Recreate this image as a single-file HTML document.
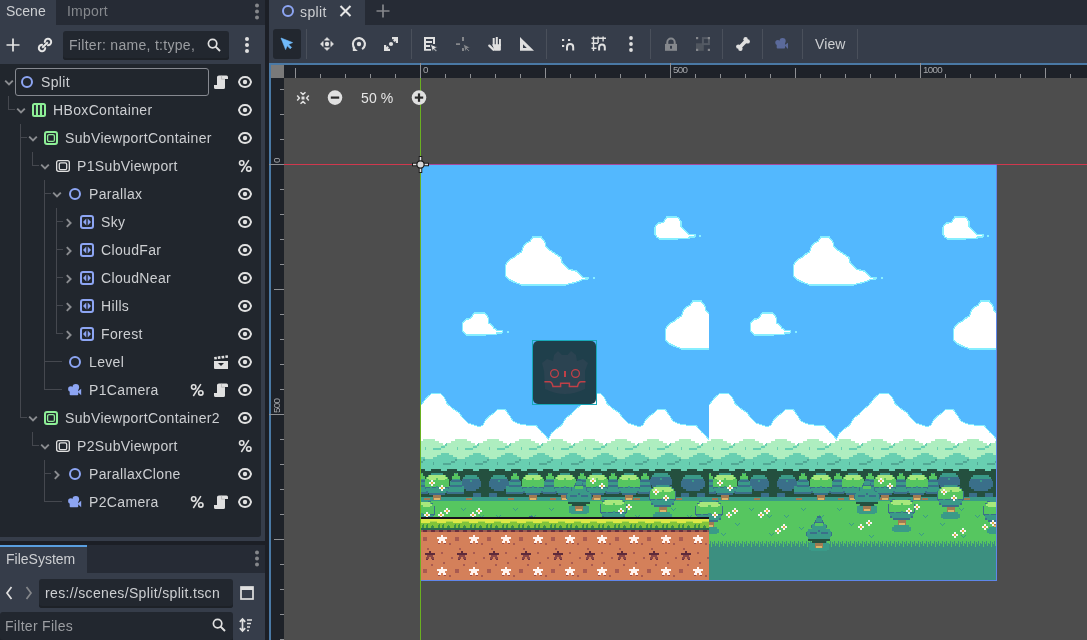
<!DOCTYPE html>
<html><head><meta charset="utf-8">
<style>
*{box-sizing:border-box;margin:0;padding:0}
html,body{width:1087px;height:640px;overflow:hidden;background:#1c1f26;font-family:"Liberation Sans",sans-serif;font-size:14px;color:#cdcfd2}
.a{position:absolute}
.tabbar{background:#262b35}
.base{background:#363d4a}
.dark{background:#21262d}
.t{position:absolute;white-space:pre;line-height:28px;height:28px;will-change:transform}
.tl{letter-spacing:0.35px}
.ln{background:#45484f}
.sep{top:29px;width:1px;height:30px;background:#4a505b}
svg{position:absolute;overflow:visible}
</style></head><body>
<svg width="0" height="0" style="position:absolute">
<defs>
<symbol id="i-node2d" viewBox="0 0 14 14"><circle cx="7" cy="7" r="5" fill="none" stroke="#8da5f3" stroke-width="2"/></symbol>
<symbol id="i-hbox" viewBox="0 0 14 14"><rect x="1" y="1" width="12" height="12" rx="1.5" fill="none" stroke="#8eef97" stroke-width="2"/><rect x="3.9" y="1" width="2.1" height="12" fill="#8eef97"/><rect x="7.9" y="1" width="2.2" height="12" fill="#8eef97"/></symbol>
<symbol id="i-svc" viewBox="0 0 14 14"><rect x="1" y="1" width="12" height="12" rx="2" fill="none" stroke="#8eef97" stroke-width="2"/><rect x="3.6" y="3.6" width="6.8" height="6.8" rx="1.5" fill="none" stroke="#8eef97" stroke-width="1.3"/></symbol>
<symbol id="i-sv" viewBox="0 0 14 14"><rect x="0.65" y="1.65" width="12.7" height="10.7" rx="2" fill="none" stroke="#e0e0e0" stroke-width="1.3"/><rect x="3.3" y="3.8" width="7.4" height="6.9" rx="1.5" fill="none" stroke="#e0e0e0" stroke-width="1.3"/></symbol>
<symbol id="i-plx" viewBox="0 0 14 14"><rect x="1" y="1" width="12" height="12" rx="2" fill="none" stroke="#8da5f3" stroke-width="2"/><path d="M3,7 L6.3,3.6 L6.3,10.4Z M11,7 L7.7,3.6 L7.7,10.4Z" fill="#8da5f3"/></symbol>
<symbol id="i-cam" viewBox="0 0 14 14"><circle cx="2.8" cy="6" r="2.7" fill="#8da5f3"/><circle cx="7.8" cy="4.2" r="3.3" fill="#8da5f3"/><rect x="1.7" y="5" width="8.5" height="7.2" rx="0.8" fill="#8da5f3"/><path d="M9.5,8.8 L13.2,5.8 L13.2,12.2 Z" fill="#8da5f3"/></symbol>
<symbol id="i-eye" viewBox="0 0 14 14"><path d="M0.9,7 C2.6,0.4 11.4,0.4 13.1,7 C11.4,13.6 2.6,13.6 0.9,7 Z" fill="none" stroke="#e0e0e0" stroke-width="1.9"/><circle cx="7" cy="7" r="2.2" fill="#e0e0e0"/></symbol>
<symbol id="i-script" viewBox="0 0 14 14"><path d="M5,0.5 H12.5 Q14,0.5 14,2 V4 H11 V12.5 Q11,14 9.5,14 H1.5 Q0,14 0,12.5 V10 H3 V2 Q3,0.5 5,0.5 Z" fill="#e0e0e0"/><path d="M7.5,0.8 V4.2 H10.8" fill="none" stroke="#b8b8b8" stroke-width="0.8"/></symbol>
<symbol id="i-clap" viewBox="0 0 14 14"><path d="M0,6 H14 V14 H1 Q0,14 0,13 Z" fill="#e0e0e0"/><path d="M4,8 H10 L7,11 Z" fill="#22262c"/><rect x="0.2" y="1.8" width="2.6" height="2.6" fill="#e0e0e0" transform="rotate(-8 1.5 3)"/><rect x="3.8" y="1.3" width="2.6" height="2.6" fill="#e0e0e0" transform="rotate(-8 5 2.6)"/><rect x="7.6" y="0.8" width="2.6" height="2.6" fill="#e0e0e0" transform="rotate(-8 9 2)"/><rect x="11.4" y="0.3" width="2.6" height="2.6" fill="#e0e0e0" transform="rotate(-8 12.7 1.6)"/></symbol>
<symbol id="i-pct" viewBox="0 0 14 14"><circle cx="3.7" cy="4" r="2.2" fill="none" stroke="#e0e0e0" stroke-width="1.6"/><circle cx="10.8" cy="9.9" r="2.2" fill="none" stroke="#e0e0e0" stroke-width="1.6"/><path d="M10.9,1.2 L3.3,13" stroke="#e0e0e0" stroke-width="1.5"/></symbol>
<symbol id="i-down" viewBox="0 0 10 10"><path d="M1.2,2.6 L5,6.4 L8.8,2.6" fill="none" stroke="#8a8c90" stroke-width="1.9"/></symbol>
<symbol id="i-right" viewBox="0 0 10 10"><path d="M2.8,1.2 L6.6,5 L2.8,8.8" fill="none" stroke="#8a8c90" stroke-width="1.9"/></symbol>
</defs></svg>

<!-- ===== LEFT TOP DOCK ===== -->
<div class="a tabbar" style="left:0;top:0;width:265px;height:25px"></div>
<div class="a base" style="left:0;top:0;width:56px;height:25px"></div>
<div class="t" style="left:6px;top:-3px;color:#cdcfd2">Scene</div>
<div class="t" style="left:67px;top:-3px;color:#85888d;letter-spacing:0.2px">Import</div>
<svg style="left:253px;top:2.5px" width="8" height="18"><circle cx="4" cy="2.5" r="2" fill="#85878b"/><circle cx="4" cy="8.5" r="2" fill="#85878b"/><circle cx="4" cy="14.5" r="2" fill="#85878b"/></svg>
<div class="a base" style="left:0;top:25px;width:265px;height:516px"></div>
<svg style="left:6px;top:38px" width="14" height="14"><path d="M7,0.5 V13.5 M0.5,7 H13.5" stroke="#e6e6e6" stroke-width="1.7"/></svg>
<svg style="left:38px;top:38px" width="14" height="14"><path d="M7.09,9.17 A3.2,3.2 0 1 1 4.83,6.91 M6.91,4.83 A3.2,3.2 0 1 1 9.17,7.09 M4.2,9.8 L9.8,4.2" fill="none" stroke="#e6e6e6" stroke-width="2"/></svg>
<div class="a" style="left:63px;top:31px;width:166px;height:29px;background:#22272f;border-radius:3px;box-shadow:inset 0 -2px 0 #1d2127"></div>
<div class="t" style="left:69px;top:31px;color:#9b9da1;letter-spacing:0.3px">Filter: name, t:type,</div>
<svg style="left:207px;top:38px" width="14" height="14"><circle cx="5.6" cy="5.6" r="4.2" fill="none" stroke="#e0e0e0" stroke-width="1.7"/><path d="M8.6,8.6 L13,13" stroke="#e0e0e0" stroke-width="2"/></svg>
<svg style="left:243px;top:37px" width="8" height="18"><circle cx="4" cy="2" r="2" fill="#e0e0e0"/><circle cx="4" cy="8" r="2" fill="#e0e0e0"/><circle cx="4" cy="14" r="2" fill="#e0e0e0"/></svg>
<div class="a dark" style="left:0;top:64px;width:261px;height:473px;border-radius:0 0 3px 0"></div>
<div class="a" style="left:15px;top:68px;width:194px;height:28px;border:1px solid #868990;border-radius:3px"></div>
<div class="a ln" style="left:8px;top:96px;width:1px;height:14px"></div>
<div class="a ln" style="left:20px;top:124px;width:1px;height:294px"></div>
<div class="a ln" style="left:32px;top:152px;width:1px;height:14px"></div>
<div class="a ln" style="left:44px;top:180px;width:1px;height:210px"></div>
<div class="a ln" style="left:56px;top:208px;width:1px;height:126px"></div>
<div class="a ln" style="left:32px;top:432px;width:1px;height:14px"></div>
<div class="a ln" style="left:44px;top:460px;width:1px;height:42px"></div>
<div class="a ln" style="left:8px;top:109px;width:7px;height:1px"></div>
<div class="a ln" style="left:20px;top:137px;width:7px;height:1px"></div>
<div class="a ln" style="left:20px;top:417px;width:7px;height:1px"></div>
<div class="a ln" style="left:32px;top:165px;width:7px;height:1px"></div>
<div class="a ln" style="left:44px;top:193px;width:7px;height:1px"></div>
<div class="a ln" style="left:44px;top:361px;width:18px;height:1px"></div>
<div class="a ln" style="left:44px;top:389px;width:18px;height:1px"></div>
<div class="a ln" style="left:56px;top:221px;width:7px;height:1px"></div>
<div class="a ln" style="left:56px;top:249px;width:7px;height:1px"></div>
<div class="a ln" style="left:56px;top:277px;width:7px;height:1px"></div>
<div class="a ln" style="left:56px;top:305px;width:7px;height:1px"></div>
<div class="a ln" style="left:56px;top:333px;width:7px;height:1px"></div>
<div class="a ln" style="left:32px;top:445px;width:7px;height:1px"></div>
<div class="a ln" style="left:44px;top:473px;width:7px;height:1px"></div>
<div class="a ln" style="left:44px;top:501px;width:18px;height:1px"></div>
<div class="t tl" style="left:41px;top:68px">Split</div>
<svg style="left:20px;top:75px" width="14" height="14"><use href="#i-node2d"/></svg>
<svg style="left:4px;top:78px" width="10" height="10"><use href="#i-down"/></svg>
<svg style="left:214px;top:75px" width="14" height="14"><use href="#i-script"/></svg>
<svg style="left:238px;top:75px" width="14" height="14"><use href="#i-eye"/></svg>
<div class="t tl" style="left:53px;top:96px">HBoxContainer</div>
<svg style="left:32px;top:103px" width="14" height="14"><use href="#i-hbox"/></svg>
<svg style="left:16px;top:106px" width="10" height="10"><use href="#i-down"/></svg>
<svg style="left:238px;top:103px" width="14" height="14"><use href="#i-eye"/></svg>
<div class="t tl" style="left:65px;top:124px">SubViewportContainer</div>
<svg style="left:44px;top:131px" width="14" height="14"><use href="#i-svc"/></svg>
<svg style="left:28px;top:134px" width="10" height="10"><use href="#i-down"/></svg>
<svg style="left:238px;top:131px" width="14" height="14"><use href="#i-eye"/></svg>
<div class="t tl" style="left:77px;top:152px">P1SubViewport</div>
<svg style="left:56px;top:159px" width="14" height="14"><use href="#i-sv"/></svg>
<svg style="left:40px;top:162px" width="10" height="10"><use href="#i-down"/></svg>
<svg style="left:238px;top:159px" width="14" height="14"><use href="#i-pct"/></svg>
<div class="t tl" style="left:89px;top:180px">Parallax</div>
<svg style="left:68px;top:187px" width="14" height="14"><use href="#i-node2d"/></svg>
<svg style="left:52px;top:190px" width="10" height="10"><use href="#i-down"/></svg>
<svg style="left:238px;top:187px" width="14" height="14"><use href="#i-eye"/></svg>
<div class="t tl" style="left:101px;top:208px">Sky</div>
<svg style="left:80px;top:215px" width="14" height="14"><use href="#i-plx"/></svg>
<svg style="left:64px;top:218px" width="10" height="10"><use href="#i-right"/></svg>
<svg style="left:238px;top:215px" width="14" height="14"><use href="#i-eye"/></svg>
<div class="t tl" style="left:101px;top:236px">CloudFar</div>
<svg style="left:80px;top:243px" width="14" height="14"><use href="#i-plx"/></svg>
<svg style="left:64px;top:246px" width="10" height="10"><use href="#i-right"/></svg>
<svg style="left:238px;top:243px" width="14" height="14"><use href="#i-eye"/></svg>
<div class="t tl" style="left:101px;top:264px">CloudNear</div>
<svg style="left:80px;top:271px" width="14" height="14"><use href="#i-plx"/></svg>
<svg style="left:64px;top:274px" width="10" height="10"><use href="#i-right"/></svg>
<svg style="left:238px;top:271px" width="14" height="14"><use href="#i-eye"/></svg>
<div class="t tl" style="left:101px;top:292px">Hills</div>
<svg style="left:80px;top:299px" width="14" height="14"><use href="#i-plx"/></svg>
<svg style="left:64px;top:302px" width="10" height="10"><use href="#i-right"/></svg>
<svg style="left:238px;top:299px" width="14" height="14"><use href="#i-eye"/></svg>
<div class="t tl" style="left:101px;top:320px">Forest</div>
<svg style="left:80px;top:327px" width="14" height="14"><use href="#i-plx"/></svg>
<svg style="left:64px;top:330px" width="10" height="10"><use href="#i-right"/></svg>
<svg style="left:238px;top:327px" width="14" height="14"><use href="#i-eye"/></svg>
<div class="t tl" style="left:89px;top:348px">Level</div>
<svg style="left:68px;top:355px" width="14" height="14"><use href="#i-node2d"/></svg>
<svg style="left:214px;top:355px" width="14" height="14"><use href="#i-clap"/></svg>
<svg style="left:238px;top:355px" width="14" height="14"><use href="#i-eye"/></svg>
<div class="t tl" style="left:89px;top:376px">P1Camera</div>
<svg style="left:68px;top:383px" width="14" height="14"><use href="#i-cam"/></svg>
<svg style="left:190px;top:383px" width="14" height="14"><use href="#i-pct"/></svg>
<svg style="left:214px;top:383px" width="14" height="14"><use href="#i-script"/></svg>
<svg style="left:238px;top:383px" width="14" height="14"><use href="#i-eye"/></svg>
<div class="t tl" style="left:65px;top:404px">SubViewportContainer2</div>
<svg style="left:44px;top:411px" width="14" height="14"><use href="#i-svc"/></svg>
<svg style="left:28px;top:414px" width="10" height="10"><use href="#i-down"/></svg>
<svg style="left:238px;top:411px" width="14" height="14"><use href="#i-eye"/></svg>
<div class="t tl" style="left:77px;top:432px">P2SubViewport</div>
<svg style="left:56px;top:439px" width="14" height="14"><use href="#i-sv"/></svg>
<svg style="left:40px;top:442px" width="10" height="10"><use href="#i-down"/></svg>
<svg style="left:238px;top:439px" width="14" height="14"><use href="#i-pct"/></svg>
<div class="t tl" style="left:89px;top:460px">ParallaxClone</div>
<svg style="left:68px;top:467px" width="14" height="14"><use href="#i-node2d"/></svg>
<svg style="left:52px;top:470px" width="10" height="10"><use href="#i-right"/></svg>
<svg style="left:238px;top:467px" width="14" height="14"><use href="#i-eye"/></svg>
<div class="t tl" style="left:89px;top:488px">P2Camera</div>
<svg style="left:68px;top:495px" width="14" height="14"><use href="#i-cam"/></svg>
<svg style="left:190px;top:495px" width="14" height="14"><use href="#i-pct"/></svg>
<svg style="left:214px;top:495px" width="14" height="14"><use href="#i-script"/></svg>
<svg style="left:238px;top:495px" width="14" height="14"><use href="#i-eye"/></svg>

<!-- ===== LEFT BOTTOM DOCK ===== -->
<div class="a tabbar" style="left:0;top:545px;width:265px;height:28px"></div>
<div class="a base" style="left:0;top:547px;width:87px;height:26px"></div>
<div class="a" style="left:0;top:545px;width:87px;height:2px;background:#5a9fe0"></div>
<div class="t" style="left:6px;top:545px">FileSystem</div>
<svg style="left:253px;top:549px" width="8" height="18"><circle cx="4" cy="3.5" r="2" fill="#85878b"/><circle cx="4" cy="9.5" r="2" fill="#85878b"/><circle cx="4" cy="15.5" r="2" fill="#85878b"/></svg>
<div class="a base" style="left:0;top:573px;width:265px;height:67px"></div>
<svg style="left:2px;top:586px" width="14" height="14"><path d="M9.5,1 L5,7 L9.5,13" fill="none" stroke="#e0e0e0" stroke-width="1.7"/></svg>
<svg style="left:22px;top:586px" width="14" height="14"><path d="M4.5,1 L9,7 L4.5,13" fill="none" stroke="#85878b" stroke-width="1.7"/></svg>
<div class="a" style="left:39px;top:579px;width:194px;height:29px;background:#22272f;border-radius:3px;box-shadow:inset 0 -2px 0 #1d2127"></div>
<div class="t" style="left:45px;top:579px;letter-spacing:0.35px">res://scenes/Split/split.tscn</div>
<svg style="left:240px;top:586px" width="14" height="14"><rect x="1" y="1" width="12" height="12" fill="none" stroke="#e0e0e0" stroke-width="1.7"/><rect x="1" y="1" width="12" height="3" fill="#e0e0e0"/></svg>
<div class="a" style="left:0;top:612px;width:233px;height:30px;background:#22272f;border-radius:3px;box-shadow:inset 0 -2px 0 #1d2127"></div>
<div class="t" style="left:5px;top:612px;color:#9b9da1;letter-spacing:0.3px">Filter Files</div>
<svg style="left:212px;top:618px" width="14" height="14"><circle cx="5.6" cy="5.6" r="4.2" fill="none" stroke="#e0e0e0" stroke-width="1.7"/><path d="M8.6,8.6 L13,13" stroke="#e0e0e0" stroke-width="2"/></svg>
<svg style="left:239px;top:618px" width="14" height="14"><path d="M3.5,1 V13 M0.8,3.8 L3.5,1 L6.2,3.8 M0.8,10.2 L3.5,13 L6.2,10.2 M8,2 H13 M8,5.5 H12 M8,9 H11 M8,12.5 H10" fill="none" stroke="#e0e0e0" stroke-width="1.7"/></svg>

<!-- ===== MAIN ===== -->
<div class="a tabbar" style="left:269px;top:0;width:818px;height:25px"></div>
<div class="a base" style="left:269px;top:0;width:96px;height:25px"></div>
<svg style="left:281px;top:4px" width="14" height="14"><use href="#i-node2d"/></svg>
<div class="t" style="left:300px;top:-2px;letter-spacing:0.4px">split</div>
<svg style="left:339px;top:5px" width="14" height="12"><path d="M1.5,1 L11.5,11 M11.5,1 L1.5,11" stroke="#e6e6e6" stroke-width="2"/></svg>
<svg style="left:376px;top:4px" width="14" height="14"><path d="M7,0.5 V13.5 M0.5,7 H13.5" stroke="#85878b" stroke-width="1.7"/></svg>
<div class="a base" style="left:269px;top:25px;width:818px;height:38px"></div>
<div class="a" style="left:273px;top:29px;width:28px;height:30px;background:#22272f;border-radius:3px"></div>
<svg style="left:280px;top:37px" width="14" height="14"><path d="M1,1 L12.6,5.6 L8.6,7.4 L11.6,10.4 L10.2,11.8 L7.2,8.8 L5.6,12.6 Z" fill="#70bafa" stroke="#70bafa" stroke-width="0.6" stroke-linejoin="round"/></svg>
<div class="a sep" style="left:306px"></div>
<svg style="left:320px;top:37px" width="14" height="14"><circle cx="7" cy="7" r="2.2" fill="#e0e0e0"/><path d="M4.3,3.2 L7,0.4 L9.7,3.2 Z M4.3,10.8 L7,13.6 L9.7,10.8 Z M3.2,4.3 L0.4,7 L3.2,9.7 Z M10.8,4.3 L13.6,7 L10.8,9.7 Z" fill="#e0e0e0" stroke="#e0e0e0" stroke-width="0.5" stroke-linejoin="round"/></svg>
<svg style="left:352px;top:37px" width="14" height="14"><circle cx="7" cy="7" r="2.2" fill="#e0e0e0"/><path d="M10.1,12.2 A6,6 0 1 0 2.6,11.3" fill="none" stroke="#e0e0e0" stroke-width="2.1"/><path d="M0.8,9 L0.8,13.9 L5.8,13.9 Z" fill="#e0e0e0"/></svg>
<svg style="left:384px;top:37px" width="14" height="14"><circle cx="7" cy="7" r="2.1" fill="#e0e0e0"/><path d="M8,1.1 H12.9 V6 M12.6,1.4 L9.8,4.2 M6,12.9 H1.1 V8 M1.4,12.6 L4.2,9.8" fill="none" stroke="#e0e0e0" stroke-width="2.2"/></svg>
<div class="a sep" style="left:411px"></div>
<svg style="left:424px;top:37px" width="14" height="14"><path d="M0,0 H11 V7 H9 V2 H2 V4 H8 V6 H2 V8 H6 V10 H2 V12 H7 V13.8 H0 Z" fill="#e0e0e0"/><path d="M6.3,7.2 L13.8,10.3 L10.8,11.4 L12.9,13.5 L11.9,14.5 L9.8,12.4 L8.7,15 Z" fill="#e0e0e0" stroke="#363d4a" stroke-width="0.9" stroke-linejoin="round"/></svg>
<svg style="left:456px;top:37px" width="14" height="14"><path d="M6,0 H8 V4 H6 Z M0,6.2 H4 V8 H0 Z M6,11 H8 V14 H6 Z" fill="#85878b"/><path d="M7.2,7 L14.4,10.4 L11.4,11.5 L13.5,13.6 L12.5,14.6 L10.4,12.5 L9.3,15.2 Z" fill="#85878b" stroke="#363d4a" stroke-width="0.9" stroke-linejoin="round"/></svg>
<svg style="left:488px;top:37px" width="14" height="14"><rect x="4.7" y="1" width="2" height="8" fill="#e0e0e0"/><rect x="7.8" y="0" width="2" height="8" fill="#e0e0e0"/><rect x="11" y="2" width="1.9" height="7" fill="#e0e0e0"/><path d="M4.3,7.2 H12.9 V12.6 Q12.9,13.8 11.7,13.8 H6.4 Z" fill="#e0e0e0"/><path d="M1.3,8.6 L5.5,12.8" stroke="#e0e0e0" stroke-width="2.3" stroke-linecap="round"/></svg>
<svg style="left:520px;top:37px" width="14" height="14"><path d="M0,0 L14,13.8 L0,13.8 Z M3,7.3 L3,11 L6.8,11 Z" fill="#e0e0e0" fill-rule="evenodd"/></svg>
<div class="a sep" style="left:546px"></div>
<svg style="left:561px;top:37px" width="14" height="14"><rect x="1" y="2" width="2.2" height="2" fill="#e0e0e0"/><rect x="7" y="2" width="2.2" height="2" fill="#e0e0e0"/><rect x="1" y="8" width="2.2" height="2" fill="#e0e0e0"/><path d="M6,13.6 V10.2 A3.1,3.1 0 0 1 12.2,10.2 V13.6" fill="none" stroke="#e0e0e0" stroke-width="2"/></svg>
<svg style="left:592px;top:37px" width="14" height="14"><path d="M1.5,-0.5 V14 M6.1,-0.5 V6 M11.1,-0.5 V4.5 M-0.5,1.2 H14 M-0.5,6.3 H6 M-0.5,11.3 H4.5" fill="none" stroke="#e0e0e0" stroke-width="1.4"/><path d="M7.1,13.6 V10.3 A2.85,2.85 0 0 1 12.8,10.3 V13.6" fill="none" stroke="#e0e0e0" stroke-width="2"/></svg>
<svg style="left:627px;top:36px" width="8" height="16"><circle cx="4" cy="2" r="1.9" fill="#e0e0e0"/><circle cx="4" cy="8" r="1.9" fill="#e0e0e0"/><circle cx="4" cy="14" r="1.9" fill="#e0e0e0"/></svg>
<div class="a sep" style="left:650px"></div>
<svg style="left:664px;top:37px" width="14" height="14"><path d="M3.3,7 V5.3 A3.7,3.7 0 0 1 10.7,5.3 V7" fill="none" stroke="#85888d" stroke-width="2"/><rect x="1" y="6.9" width="12" height="6.9" fill="#85888d"/><rect x="6" y="8.8" width="2" height="2.9" fill="#363d4a"/></svg>
<svg style="left:696px;top:37px" width="14" height="14"><rect x="0" y="6.3" width="7.8" height="7.5" fill="#50565f"/><rect x="6.9" y="1.1" width="6" height="6" fill="none" stroke="#545a64" stroke-width="2"/><rect x="0" y="0" width="2.2" height="2.2" fill="#85888d"/><rect x="11.8" y="0" width="2.2" height="2.2" fill="#85888d"/><rect x="0" y="11.8" width="2.2" height="2.2" fill="#85888d"/><rect x="11.8" y="11.8" width="2.2" height="2.2" fill="#85888d"/></svg>
<div class="a sep" style="left:722px"></div>
<svg style="left:736px;top:37px" width="14" height="14"><path d="M3.6,10.4 L10.4,3.6" stroke="#e0e0e0" stroke-width="3.6"/><circle cx="2.3" cy="9.6" r="2.2" fill="#e0e0e0"/><circle cx="4.4" cy="11.7" r="2.2" fill="#e0e0e0"/><circle cx="9.6" cy="2.3" r="2.2" fill="#e0e0e0"/><circle cx="11.7" cy="4.4" r="2.2" fill="#e0e0e0"/></svg>
<div class="a sep" style="left:762px"></div>
<svg style="left:775px;top:37px" width="14" height="14"><circle cx="2.8" cy="5.6" r="2.5" fill="#5b6a9b"/><circle cx="7.6" cy="4" r="3.1" fill="#5b6a9b"/><rect x="1.7" y="5" width="8.3" height="6.6" rx="0.8" fill="#5b6a9b"/><path d="M9.4,8.3 L13,5.8 L13,11.9 Z" fill="#5b6a9b"/></svg>
<div class="a sep" style="left:802px"></div>
<div class="t" style="left:815px;top:30px;letter-spacing:0.1px">View</div>
<div class="a sep" style="left:857px"></div>

<!-- ruler frame -->
<div class="a" style="left:269px;top:63px;width:818px;height:577px;background:#4a79a5"></div>
<div class="a" style="left:271px;top:65px;width:816px;height:575px;background:#1e2229"></div>
<div class="a" style="left:271px;top:65px;width:13px;height:13px;background:#7a7a7a"></div>
<div class="a" style="left:284px;top:78px;width:803px;height:562px;background:#4d4d4d"></div>
<div class="a" style="left:295px;top:68px;width:1px;height:10px;background:#8e9094"></div>
<div class="a" style="left:320px;top:74px;width:1px;height:4px;background:#8e9094"></div>
<div class="a" style="left:345px;top:74px;width:1px;height:4px;background:#8e9094"></div>
<div class="a" style="left:370px;top:74px;width:1px;height:4px;background:#8e9094"></div>
<div class="a" style="left:395px;top:74px;width:1px;height:4px;background:#8e9094"></div>
<div class="a" style="left:420px;top:63px;width:1px;height:15px;background:#8e9094"></div>
<div class="a" style="left:445px;top:74px;width:1px;height:4px;background:#8e9094"></div>
<div class="a" style="left:470px;top:74px;width:1px;height:4px;background:#8e9094"></div>
<div class="a" style="left:495px;top:74px;width:1px;height:4px;background:#8e9094"></div>
<div class="a" style="left:520px;top:74px;width:1px;height:4px;background:#8e9094"></div>
<div class="a" style="left:545px;top:68px;width:1px;height:10px;background:#8e9094"></div>
<div class="a" style="left:570px;top:74px;width:1px;height:4px;background:#8e9094"></div>
<div class="a" style="left:595px;top:74px;width:1px;height:4px;background:#8e9094"></div>
<div class="a" style="left:620px;top:74px;width:1px;height:4px;background:#8e9094"></div>
<div class="a" style="left:645px;top:74px;width:1px;height:4px;background:#8e9094"></div>
<div class="a" style="left:670px;top:63px;width:1px;height:15px;background:#8e9094"></div>
<div class="a" style="left:695px;top:74px;width:1px;height:4px;background:#8e9094"></div>
<div class="a" style="left:720px;top:74px;width:1px;height:4px;background:#8e9094"></div>
<div class="a" style="left:745px;top:74px;width:1px;height:4px;background:#8e9094"></div>
<div class="a" style="left:770px;top:74px;width:1px;height:4px;background:#8e9094"></div>
<div class="a" style="left:795px;top:68px;width:1px;height:10px;background:#8e9094"></div>
<div class="a" style="left:820px;top:74px;width:1px;height:4px;background:#8e9094"></div>
<div class="a" style="left:845px;top:74px;width:1px;height:4px;background:#8e9094"></div>
<div class="a" style="left:870px;top:74px;width:1px;height:4px;background:#8e9094"></div>
<div class="a" style="left:895px;top:74px;width:1px;height:4px;background:#8e9094"></div>
<div class="a" style="left:920px;top:63px;width:1px;height:15px;background:#8e9094"></div>
<div class="a" style="left:945px;top:74px;width:1px;height:4px;background:#8e9094"></div>
<div class="a" style="left:970px;top:74px;width:1px;height:4px;background:#8e9094"></div>
<div class="a" style="left:995px;top:74px;width:1px;height:4px;background:#8e9094"></div>
<div class="a" style="left:1020px;top:74px;width:1px;height:4px;background:#8e9094"></div>
<div class="a" style="left:1045px;top:68px;width:1px;height:10px;background:#8e9094"></div>
<div class="a" style="left:1070px;top:74px;width:1px;height:4px;background:#8e9094"></div>
<div class="a" style="left:280px;top:89px;width:4px;height:1px;background:#8e9094"></div>
<div class="a" style="left:280px;top:114px;width:4px;height:1px;background:#8e9094"></div>
<div class="a" style="left:280px;top:139px;width:4px;height:1px;background:#8e9094"></div>
<div class="a" style="left:269px;top:164px;width:15px;height:1px;background:#8e9094"></div>
<div class="a" style="left:280px;top:189px;width:4px;height:1px;background:#8e9094"></div>
<div class="a" style="left:280px;top:214px;width:4px;height:1px;background:#8e9094"></div>
<div class="a" style="left:280px;top:239px;width:4px;height:1px;background:#8e9094"></div>
<div class="a" style="left:280px;top:264px;width:4px;height:1px;background:#8e9094"></div>
<div class="a" style="left:274px;top:289px;width:10px;height:1px;background:#8e9094"></div>
<div class="a" style="left:280px;top:314px;width:4px;height:1px;background:#8e9094"></div>
<div class="a" style="left:280px;top:339px;width:4px;height:1px;background:#8e9094"></div>
<div class="a" style="left:280px;top:364px;width:4px;height:1px;background:#8e9094"></div>
<div class="a" style="left:280px;top:389px;width:4px;height:1px;background:#8e9094"></div>
<div class="a" style="left:269px;top:414px;width:15px;height:1px;background:#8e9094"></div>
<div class="a" style="left:280px;top:439px;width:4px;height:1px;background:#8e9094"></div>
<div class="a" style="left:280px;top:464px;width:4px;height:1px;background:#8e9094"></div>
<div class="a" style="left:280px;top:489px;width:4px;height:1px;background:#8e9094"></div>
<div class="a" style="left:280px;top:514px;width:4px;height:1px;background:#8e9094"></div>
<div class="a" style="left:274px;top:539px;width:10px;height:1px;background:#8e9094"></div>
<div class="a" style="left:280px;top:564px;width:4px;height:1px;background:#8e9094"></div>
<div class="a" style="left:280px;top:589px;width:4px;height:1px;background:#8e9094"></div>
<div class="a" style="left:280px;top:614px;width:4px;height:1px;background:#8e9094"></div>
<div class="a" style="left:280px;top:639px;width:4px;height:1px;background:#8e9094"></div>
<div class="a" style="left:423px;top:64px;font-size:9.8px;letter-spacing:-0.7px;line-height:12px;will-change:transform;color:#a4a6aa">0</div>
<div class="a" style="left:673px;top:64px;font-size:9.8px;letter-spacing:-0.7px;line-height:12px;will-change:transform;color:#a4a6aa">500</div>
<div class="a" style="left:923px;top:64px;font-size:9.8px;letter-spacing:-0.7px;line-height:12px;will-change:transform;color:#a4a6aa">1000</div>
<div class="a" style="left:270.5px;top:163px;font-size:9.8px;letter-spacing:-0.7px;line-height:12px;will-change:transform;color:#a4a6aa;transform-origin:0 0;transform:rotate(-90deg)">0</div>
<div class="a" style="left:270.5px;top:413px;font-size:9.8px;letter-spacing:-0.7px;line-height:12px;will-change:transform;color:#a4a6aa;transform-origin:0 0;transform:rotate(-90deg)">500</div>
<svg style="left:421px;top:165px" width="576" height="416" shape-rendering="crispEdges">
<defs><clipPath id="vc"><rect x="0" y="0" width="288" height="416"/></clipPath>
<g id="pview"><rect x="0" y="0" width="288" height="416" fill="#53b8fe"/>
<polygon points="112.0,72.0 120.2,72.0 124.0,77.2 125.0,81.4 130.0,86.0 135.2,89.4 140.0,92.6 141.3,97.8 144.6,100.6 147.9,104.4 155.8,106.2 159.6,110.0 161.5,112.3 167.6,112.8 167.6,113.7 161.5,114.7 155.8,117.0 147.9,118.9 144.6,119.8 100.6,119.8 93.0,117.0 88.4,114.7 84.6,111.4 84.2,101.0 86.5,96.9 88.8,94.5 93.0,92.2 96.3,89.4 100.6,87.0 102.4,81.4 104.8,78.6 109.0,76.2 111.3,73.4" fill="#fff" stroke="#86eeff" stroke-width="1.4" stroke-linejoin="miter"/><rect x="172" y="112" width="2" height="2" fill="#86eeff"/>
<polygon points="272.0,136.0 280.2,136.0 284.0,141.2 285.0,145.4 290.0,150.0 295.2,153.4 300.0,156.6 301.3,161.8 304.6,164.6 307.9,168.4 315.8,170.2 319.6,174.0 321.5,176.3 327.6,176.8 327.6,177.7 321.5,178.7 315.8,181.0 307.9,182.9 304.6,183.8 260.6,183.8 253.0,181.0 248.4,178.7 244.6,175.4 244.2,165.0 246.5,160.9 248.8,158.5 253.0,156.2 256.3,153.4 260.6,151.0 262.4,145.4 264.8,142.6 269.0,140.2 271.3,137.4" fill="#fff" stroke="#86eeff" stroke-width="1.4" stroke-linejoin="miter"/><rect x="332" y="176" width="2" height="2" fill="#86eeff"/>
<polygon points="245.8,52.0 256.0,52.0 258.0,53.8 259.9,56.6 259.9,61.6 262.1,63.2 264.0,65.4 266.0,67.6 268.2,69.3 274.0,69.8 274.0,71.8 268.2,72.0 267.9,73.7 238.4,74.0 235.9,72.0 234.0,69.8 234.0,62.1 235.9,59.6 237.8,58.0 242.0,57.7 243.9,54.7 245.8,52.5" fill="#fff" stroke="#86eeff" stroke-width="1.4" stroke-linejoin="miter"/><rect x="278" y="70" width="2" height="2" fill="#86eeff"/>
<polygon points="53.3,148.0 63.5,148.0 65.5,149.8 67.4,152.6 67.4,157.6 69.6,159.2 71.5,161.4 73.5,163.6 75.7,165.3 81.5,165.8 81.5,167.8 75.7,168.0 75.4,169.7 45.9,170.0 43.4,168.0 41.5,165.8 41.5,158.1 43.4,155.6 45.3,154.0 49.5,153.7 51.4,150.7 53.3,148.5" fill="#fff" stroke="#86eeff" stroke-width="1.4" stroke-linejoin="miter"/><rect x="85.5" y="166" width="2" height="2" fill="#86eeff"/>
<polygon points="-39.7,266.6 -35.0,271.2 -32.7,274.4 -29.5,268.1 -24.0,263.4 -19.4,260.3 -14.7,252.5 -10.0,249.4 -5.0,244.0 0.0,240.0 4.7,233.8 7.8,230.6 10.2,229.0 13.3,228.0 18.8,228.0 23.4,232.2 25.8,238.4 31.2,243.1 38.3,247.8 41.4,252.5 46.9,258.0 53.9,260.3 57.8,261.9 61.7,260.3 64.8,254.8 68.8,250.9 73.4,247.8 76.6,244.7 84.4,244.7 88.3,250.2 92.2,256.4 100.0,259.5 107.8,260.3 115.6,261.0 120.3,266.6 125.0,271.2 127.3,274.4 130.5,268.1 136.0,263.4 140.6,260.3 145.3,252.5 150.0,249.4 155.0,244.0 160.0,240.0 164.7,233.8 167.8,230.6 170.2,229.0 173.3,228.0 178.8,228.0 183.4,232.2 185.8,238.4 191.2,243.1 198.3,247.8 201.4,252.5 206.9,258.0 213.9,260.3 217.8,261.9 221.7,260.3 224.8,254.8 228.8,250.9 233.4,247.8 236.6,244.7 244.4,244.7 248.3,250.2 252.2,256.4 260.0,259.5 267.8,260.3 275.6,261.0 280.3,266.6 285.0,271.2 287.3,274.4 290.5,268.1 296.0,263.4 300.6,260.3 305.3,252.5 310.0,249.4 315.0,244.0 320.0,240.0 324.7,233.8 327.8,230.6 330.0,300.0 -40.0,300.0" fill="#fff" stroke="#86eeff" stroke-width="1"/>
<polygon points="-94.0,274.0 -82.0,274.0 -82.0,276.0 -78.0,276.0 -78.0,278.0 -74.0,278.0 -74.0,280.0 -70.0,280.0 -70.0,278.0 -66.0,278.0 -66.0,276.0 -62.0,276.0 -62.0,274.0 -50.0,274.0 -50.0,276.0 -46.0,276.0 -46.0,278.0 -42.0,278.0 -42.0,280.0 -38.0,280.0 -38.0,278.0 -34.0,278.0 -34.0,276.0 -30.0,276.0 -30.0,274.0 -18.0,274.0 -18.0,276.0 -14.0,276.0 -14.0,278.0 -10.0,278.0 -10.0,280.0 -6.0,280.0 -6.0,278.0 -2.0,278.0 -2.0,276.0 2.0,276.0 2.0,274.0 14.0,274.0 14.0,276.0 18.0,276.0 18.0,278.0 22.0,278.0 22.0,280.0 26.0,280.0 26.0,278.0 30.0,278.0 30.0,276.0 34.0,276.0 34.0,274.0 46.0,274.0 46.0,276.0 50.0,276.0 50.0,278.0 54.0,278.0 54.0,280.0 58.0,280.0 58.0,278.0 62.0,278.0 62.0,276.0 66.0,276.0 66.0,274.0 78.0,274.0 78.0,276.0 82.0,276.0 82.0,278.0 86.0,278.0 86.0,280.0 90.0,280.0 90.0,278.0 94.0,278.0 94.0,276.0 98.0,276.0 98.0,274.0 110.0,274.0 110.0,276.0 114.0,276.0 114.0,278.0 118.0,278.0 118.0,280.0 122.0,280.0 122.0,278.0 126.0,278.0 126.0,276.0 130.0,276.0 130.0,274.0 142.0,274.0 142.0,276.0 146.0,276.0 146.0,278.0 150.0,278.0 150.0,280.0 154.0,280.0 154.0,278.0 158.0,278.0 158.0,276.0 162.0,276.0 162.0,274.0 174.0,274.0 174.0,276.0 178.0,276.0 178.0,278.0 182.0,278.0 182.0,280.0 186.0,280.0 186.0,278.0 190.0,278.0 190.0,276.0 194.0,276.0 194.0,274.0 206.0,274.0 206.0,276.0 210.0,276.0 210.0,278.0 214.0,278.0 214.0,280.0 218.0,280.0 218.0,278.0 222.0,278.0 222.0,276.0 226.0,276.0 226.0,274.0 238.0,274.0 238.0,276.0 242.0,276.0 242.0,278.0 246.0,278.0 246.0,280.0 250.0,280.0 250.0,278.0 254.0,278.0 254.0,276.0 258.0,276.0 258.0,274.0 270.0,274.0 270.0,276.0 274.0,276.0 274.0,278.0 278.0,278.0 278.0,280.0 282.0,280.0 282.0,278.0 286.0,278.0 286.0,276.0 290.0,276.0 290.0,274.0 302.0,274.0 302.0,276.0 306.0,276.0 306.0,278.0 310.0,278.0 310.0,280.0 314.0,280.0 314.0,278.0 318.0,278.0 318.0,276.0 322.0,276.0 322.0,274.0 334.0,274.0 334.0,276.0 338.0,276.0 338.0,278.0 342.0,278.0 342.0,280.0 346.0,280.0 346.0,278.0 350.0,278.0 350.0,276.0 354.0,276.0 330.0,310.0 -40.0,310.0" fill="#aeeec0" shape-rendering="crispEdges"/>
<path d="M-20,285 h8 v-2 h4 v-2 h2 v-2 h-2 v2 h-4 v2 h-8z" fill="#68cfb1"/>
<rect x="-28" y="282" width="1" height="3" fill="#68cfb1"/><rect x="-7" y="278" width="1" height="3" fill="#68cfb1"/>
<path d="M12,285 h8 v-2 h4 v-2 h2 v-2 h-2 v2 h-4 v2 h-8z" fill="#68cfb1"/>
<rect x="4" y="282" width="1" height="3" fill="#68cfb1"/><rect x="25" y="278" width="1" height="3" fill="#68cfb1"/>
<path d="M44,285 h8 v-2 h4 v-2 h2 v-2 h-2 v2 h-4 v2 h-8z" fill="#68cfb1"/>
<rect x="36" y="282" width="1" height="3" fill="#68cfb1"/><rect x="57" y="278" width="1" height="3" fill="#68cfb1"/>
<path d="M76,285 h8 v-2 h4 v-2 h2 v-2 h-2 v2 h-4 v2 h-8z" fill="#68cfb1"/>
<rect x="68" y="282" width="1" height="3" fill="#68cfb1"/><rect x="89" y="278" width="1" height="3" fill="#68cfb1"/>
<path d="M108,285 h8 v-2 h4 v-2 h2 v-2 h-2 v2 h-4 v2 h-8z" fill="#68cfb1"/>
<rect x="100" y="282" width="1" height="3" fill="#68cfb1"/><rect x="121" y="278" width="1" height="3" fill="#68cfb1"/>
<path d="M140,285 h8 v-2 h4 v-2 h2 v-2 h-2 v2 h-4 v2 h-8z" fill="#68cfb1"/>
<rect x="132" y="282" width="1" height="3" fill="#68cfb1"/><rect x="153" y="278" width="1" height="3" fill="#68cfb1"/>
<path d="M172,285 h8 v-2 h4 v-2 h2 v-2 h-2 v2 h-4 v2 h-8z" fill="#68cfb1"/>
<rect x="164" y="282" width="1" height="3" fill="#68cfb1"/><rect x="185" y="278" width="1" height="3" fill="#68cfb1"/>
<path d="M204,285 h8 v-2 h4 v-2 h2 v-2 h-2 v2 h-4 v2 h-8z" fill="#68cfb1"/>
<rect x="196" y="282" width="1" height="3" fill="#68cfb1"/><rect x="217" y="278" width="1" height="3" fill="#68cfb1"/>
<path d="M236,285 h8 v-2 h4 v-2 h2 v-2 h-2 v2 h-4 v2 h-8z" fill="#68cfb1"/>
<rect x="228" y="282" width="1" height="3" fill="#68cfb1"/><rect x="249" y="278" width="1" height="3" fill="#68cfb1"/>
<path d="M268,285 h8 v-2 h4 v-2 h2 v-2 h-2 v2 h-4 v2 h-8z" fill="#68cfb1"/>
<rect x="260" y="282" width="1" height="3" fill="#68cfb1"/><rect x="281" y="278" width="1" height="3" fill="#68cfb1"/>
<path d="M300,285 h8 v-2 h4 v-2 h2 v-2 h-2 v2 h-4 v2 h-8z" fill="#68cfb1"/>
<rect x="292" y="282" width="1" height="3" fill="#68cfb1"/><rect x="313" y="278" width="1" height="3" fill="#68cfb1"/>
<polygon points="-56.0,294.0 -52.0,294.0 -52.0,292.0 -48.0,292.0 -48.0,290.0 -44.0,290.0 -44.0,288.0 -36.0,288.0 -36.0,290.0 -32.0,290.0 -32.0,292.0 -28.0,292.0 -28.0,294.0 -24.0,294.0 -24.0,294.0 -20.0,294.0 -20.0,292.0 -16.0,292.0 -16.0,290.0 -12.0,290.0 -12.0,288.0 -4.0,288.0 -4.0,290.0 0.0,290.0 0.0,292.0 4.0,292.0 4.0,294.0 8.0,294.0 8.0,294.0 12.0,294.0 12.0,292.0 16.0,292.0 16.0,290.0 20.0,290.0 20.0,288.0 28.0,288.0 28.0,290.0 32.0,290.0 32.0,292.0 36.0,292.0 36.0,294.0 40.0,294.0 40.0,294.0 44.0,294.0 44.0,292.0 48.0,292.0 48.0,290.0 52.0,290.0 52.0,288.0 60.0,288.0 60.0,290.0 64.0,290.0 64.0,292.0 68.0,292.0 68.0,294.0 72.0,294.0 72.0,294.0 76.0,294.0 76.0,292.0 80.0,292.0 80.0,290.0 84.0,290.0 84.0,288.0 92.0,288.0 92.0,290.0 96.0,290.0 96.0,292.0 100.0,292.0 100.0,294.0 104.0,294.0 104.0,294.0 108.0,294.0 108.0,292.0 112.0,292.0 112.0,290.0 116.0,290.0 116.0,288.0 124.0,288.0 124.0,290.0 128.0,290.0 128.0,292.0 132.0,292.0 132.0,294.0 136.0,294.0 136.0,294.0 140.0,294.0 140.0,292.0 144.0,292.0 144.0,290.0 148.0,290.0 148.0,288.0 156.0,288.0 156.0,290.0 160.0,290.0 160.0,292.0 164.0,292.0 164.0,294.0 168.0,294.0 168.0,294.0 172.0,294.0 172.0,292.0 176.0,292.0 176.0,290.0 180.0,290.0 180.0,288.0 188.0,288.0 188.0,290.0 192.0,290.0 192.0,292.0 196.0,292.0 196.0,294.0 200.0,294.0 200.0,294.0 204.0,294.0 204.0,292.0 208.0,292.0 208.0,290.0 212.0,290.0 212.0,288.0 220.0,288.0 220.0,290.0 224.0,290.0 224.0,292.0 228.0,292.0 228.0,294.0 232.0,294.0 232.0,294.0 236.0,294.0 236.0,292.0 240.0,292.0 240.0,290.0 244.0,290.0 244.0,288.0 252.0,288.0 252.0,290.0 256.0,290.0 256.0,292.0 260.0,292.0 260.0,294.0 264.0,294.0 264.0,294.0 268.0,294.0 268.0,292.0 272.0,292.0 272.0,290.0 276.0,290.0 276.0,288.0 284.0,288.0 284.0,290.0 288.0,290.0 288.0,292.0 292.0,292.0 292.0,294.0 296.0,294.0 296.0,294.0 300.0,294.0 300.0,292.0 304.0,292.0 304.0,290.0 308.0,290.0 308.0,288.0 316.0,288.0 316.0,290.0 320.0,290.0 320.0,292.0 324.0,292.0 324.0,294.0 328.0,294.0 328.0,294.0 332.0,294.0 332.0,292.0 336.0,292.0 336.0,290.0 340.0,290.0 340.0,288.0 348.0,288.0 348.0,290.0 352.0,290.0 352.0,292.0 356.0,292.0 356.0,294.0 360.0,294.0 352.0,310.0 -64.0,310.0" fill="#68cfb1" shape-rendering="crispEdges"/>
<path d="M-10,300 h8 v-2 h4 v-2 h2 v-2 h-2 v2 h-4 v2 h-8z" fill="#52a894"/>
<rect x="-20" y="297" width="1" height="3" fill="#52a894"/>
<path d="M22,300 h8 v-2 h4 v-2 h2 v-2 h-2 v2 h-4 v2 h-8z" fill="#52a894"/>
<rect x="12" y="297" width="1" height="3" fill="#52a894"/>
<path d="M54,300 h8 v-2 h4 v-2 h2 v-2 h-2 v2 h-4 v2 h-8z" fill="#52a894"/>
<rect x="44" y="297" width="1" height="3" fill="#52a894"/>
<path d="M86,300 h8 v-2 h4 v-2 h2 v-2 h-2 v2 h-4 v2 h-8z" fill="#52a894"/>
<rect x="76" y="297" width="1" height="3" fill="#52a894"/>
<path d="M118,300 h8 v-2 h4 v-2 h2 v-2 h-2 v2 h-4 v2 h-8z" fill="#52a894"/>
<rect x="108" y="297" width="1" height="3" fill="#52a894"/>
<path d="M150,300 h8 v-2 h4 v-2 h2 v-2 h-2 v2 h-4 v2 h-8z" fill="#52a894"/>
<rect x="140" y="297" width="1" height="3" fill="#52a894"/>
<path d="M182,300 h8 v-2 h4 v-2 h2 v-2 h-2 v2 h-4 v2 h-8z" fill="#52a894"/>
<rect x="172" y="297" width="1" height="3" fill="#52a894"/>
<path d="M214,300 h8 v-2 h4 v-2 h2 v-2 h-2 v2 h-4 v2 h-8z" fill="#52a894"/>
<rect x="204" y="297" width="1" height="3" fill="#52a894"/>
<path d="M246,300 h8 v-2 h4 v-2 h2 v-2 h-2 v2 h-4 v2 h-8z" fill="#52a894"/>
<rect x="236" y="297" width="1" height="3" fill="#52a894"/>
<path d="M278,300 h8 v-2 h4 v-2 h2 v-2 h-2 v2 h-4 v2 h-8z" fill="#52a894"/>
<rect x="268" y="297" width="1" height="3" fill="#52a894"/>
<path d="M310,300 h8 v-2 h4 v-2 h2 v-2 h-2 v2 h-4 v2 h-8z" fill="#52a894"/>
<rect x="300" y="297" width="1" height="3" fill="#52a894"/>
<rect x="0" y="304" width="288" height="32" fill="#24503f"/>
<rect x="4" y="304" width="6" height="1.5" fill="#68cfb1"/>
<rect x="20" y="304" width="6" height="1.5" fill="#68cfb1"/>
<rect x="36" y="304" width="6" height="1.5" fill="#68cfb1"/>
<rect x="52" y="304" width="6" height="1.5" fill="#68cfb1"/>
<rect x="68" y="304" width="6" height="1.5" fill="#68cfb1"/>
<rect x="84" y="304" width="6" height="1.5" fill="#68cfb1"/>
<rect x="100" y="304" width="6" height="1.5" fill="#68cfb1"/>
<rect x="116" y="304" width="6" height="1.5" fill="#68cfb1"/>
<rect x="132" y="304" width="6" height="1.5" fill="#68cfb1"/>
<rect x="148" y="304" width="6" height="1.5" fill="#68cfb1"/>
<rect x="164" y="304" width="6" height="1.5" fill="#68cfb1"/>
<rect x="180" y="304" width="6" height="1.5" fill="#68cfb1"/>
<rect x="196" y="304" width="6" height="1.5" fill="#68cfb1"/>
<rect x="212" y="304" width="6" height="1.5" fill="#68cfb1"/>
<rect x="228" y="304" width="6" height="1.5" fill="#68cfb1"/>
<rect x="244" y="304" width="6" height="1.5" fill="#68cfb1"/>
<rect x="260" y="304" width="6" height="1.5" fill="#68cfb1"/>
<rect x="276" y="304" width="6" height="1.5" fill="#68cfb1"/>
<rect x="292" y="304" width="6" height="1.5" fill="#68cfb1"/>
<rect x="44" y="310" width="12" height="2" fill="#3a9a88"/><rect x="42" y="312" width="16" height="3" fill="#3a9a88"/><rect x="41" y="314" width="18" height="2" fill="#3a6f8a"/><rect x="40" y="316" width="20" height="6" fill="#3a6f8a"/><rect x="42" y="322" width="16" height="2" fill="#3a6f8a"/><rect x="45" y="324" width="10" height="2" fill="#3a6f8a"/><rect x="49.0" y="315" width="2" height="2" fill="#3a9a88"/>
<rect x="52" y="328" width="8" height="4" fill="#3a6f8a"/>
<rect x="72" y="310" width="12" height="2" fill="#3a9a88"/><rect x="70" y="312" width="16" height="3" fill="#3a9a88"/><rect x="69" y="314" width="18" height="2" fill="#3a6f8a"/><rect x="68" y="316" width="20" height="6" fill="#3a6f8a"/><rect x="70" y="322" width="16" height="2" fill="#3a6f8a"/><rect x="73" y="324" width="10" height="2" fill="#3a6f8a"/><rect x="77.0" y="315" width="2" height="2" fill="#3a9a88"/>
<rect x="68" y="328" width="8" height="4" fill="#3a6f8a"/>
<rect x="264" y="310" width="16" height="2" fill="#3a9a88"/><rect x="262" y="312" width="20" height="3" fill="#3a9a88"/><rect x="261" y="314" width="22" height="2" fill="#3a6f8a"/><rect x="260" y="316" width="24" height="6" fill="#3a6f8a"/><rect x="262" y="322" width="20" height="2" fill="#3a6f8a"/><rect x="265" y="324" width="14" height="2" fill="#3a6f8a"/><rect x="271.0" y="315" width="2" height="2" fill="#3a9a88"/>
<rect x="260" y="328" width="8" height="4" fill="#3a6f8a"/><rect x="276" y="328" width="8" height="4" fill="#3a6f8a"/>
<rect x="0" y="332" width="288" height="4" fill="#3a9a88"/>
<rect x="3" y="333" width="6" height="2" fill="#a07a52"/>


<rect x="45" y="333" width="6" height="2" fill="#a07a52"/>


<rect x="87" y="333" width="6" height="2" fill="#a07a52"/>


<rect x="129" y="333" width="6" height="2" fill="#a07a52"/>


<rect x="171" y="333" width="6" height="2" fill="#a07a52"/>


<rect x="213" y="333" width="6" height="2" fill="#a07a52"/>


<rect x="255" y="333" width="6" height="2" fill="#a07a52"/>

<rect x="-2.0" y="308" width="4" height="3" fill="#56c660"/><rect x="-1.0" y="308" width="2" height="1" fill="#3a9a88"/><rect x="-4.0" y="311" width="8" height="5" fill="#56c660"/><rect x="-4.0" y="314" width="8" height="2" fill="#3a9a88"/><rect x="-6.0" y="316" width="12" height="6" fill="#3a9a88"/><rect x="-6.0" y="320" width="12" height="1.5" fill="#3a6f8a"/><rect x="-5.0" y="315" width="10" height="1.5" fill="#3a6f8a"/><rect x="-7" y="321" width="14" height="7" fill="#3a9a88"/><rect x="-7" y="327" width="14" height="1.5" fill="#3a6f8a"/><rect x="-6.0" y="321" width="12" height="1.2" fill="#3a6f8a"/>
<rect x="32.5" y="308" width="4" height="3" fill="#56c660"/><rect x="33.5" y="308" width="2" height="1" fill="#3a9a88"/><rect x="30.5" y="311" width="8" height="5" fill="#56c660"/><rect x="30.5" y="314" width="8" height="2" fill="#3a9a88"/><rect x="28.5" y="316" width="12" height="6" fill="#3a9a88"/><rect x="28.5" y="320" width="12" height="1.5" fill="#3a6f8a"/><rect x="29.5" y="315" width="10" height="1.5" fill="#3a6f8a"/><rect x="26" y="321" width="17" height="7" fill="#3a9a88"/><rect x="26" y="327" width="17" height="1.5" fill="#3a6f8a"/><rect x="28.5" y="321" width="12" height="1.2" fill="#3a6f8a"/>
<rect x="91.5" y="308" width="4" height="3" fill="#56c660"/><rect x="92.5" y="308" width="2" height="1" fill="#3a9a88"/><rect x="89.5" y="311" width="8" height="5" fill="#56c660"/><rect x="89.5" y="314" width="8" height="2" fill="#3a9a88"/><rect x="87.5" y="316" width="12" height="6" fill="#3a9a88"/><rect x="87.5" y="320" width="12" height="1.5" fill="#3a6f8a"/><rect x="88.5" y="315" width="10" height="1.5" fill="#3a6f8a"/><rect x="85" y="321" width="17" height="7" fill="#3a9a88"/><rect x="85" y="327" width="17" height="1.5" fill="#3a6f8a"/><rect x="87.5" y="321" width="12" height="1.2" fill="#3a6f8a"/>
<rect x="126.5" y="308" width="4" height="3" fill="#56c660"/><rect x="127.5" y="308" width="2" height="1" fill="#3a9a88"/><rect x="124.5" y="311" width="8" height="5" fill="#56c660"/><rect x="124.5" y="314" width="8" height="2" fill="#3a9a88"/><rect x="122.5" y="316" width="12" height="6" fill="#3a9a88"/><rect x="122.5" y="320" width="12" height="1.5" fill="#3a6f8a"/><rect x="123.5" y="315" width="10" height="1.5" fill="#3a6f8a"/><rect x="122" y="321" width="13" height="7" fill="#3a9a88"/><rect x="122" y="327" width="13" height="1.5" fill="#3a6f8a"/><rect x="122.5" y="321" width="12" height="1.2" fill="#3a6f8a"/>
<rect x="158.5" y="308" width="4" height="3" fill="#56c660"/><rect x="159.5" y="308" width="2" height="1" fill="#3a9a88"/><rect x="156.5" y="311" width="8" height="5" fill="#56c660"/><rect x="156.5" y="314" width="8" height="2" fill="#3a9a88"/><rect x="154.5" y="316" width="12" height="6" fill="#3a9a88"/><rect x="154.5" y="320" width="12" height="1.5" fill="#3a6f8a"/><rect x="155.5" y="315" width="10" height="1.5" fill="#3a6f8a"/><rect x="154" y="321" width="13" height="7" fill="#3a9a88"/><rect x="154" y="327" width="13" height="1.5" fill="#3a6f8a"/><rect x="154.5" y="321" width="12" height="1.2" fill="#3a6f8a"/>
<rect x="189.5" y="308" width="4" height="3" fill="#56c660"/><rect x="190.5" y="308" width="2" height="1" fill="#3a9a88"/><rect x="187.5" y="311" width="8" height="5" fill="#56c660"/><rect x="187.5" y="314" width="8" height="2" fill="#3a9a88"/><rect x="185.5" y="316" width="12" height="6" fill="#3a9a88"/><rect x="185.5" y="320" width="12" height="1.5" fill="#3a6f8a"/><rect x="186.5" y="315" width="10" height="1.5" fill="#3a6f8a"/><rect x="185" y="321" width="13" height="7" fill="#3a9a88"/><rect x="185" y="327" width="13" height="1.5" fill="#3a6f8a"/><rect x="185.5" y="321" width="12" height="1.2" fill="#3a6f8a"/>
<rect x="221.5" y="308" width="4" height="3" fill="#56c660"/><rect x="222.5" y="308" width="2" height="1" fill="#3a9a88"/><rect x="219.5" y="311" width="8" height="5" fill="#56c660"/><rect x="219.5" y="314" width="8" height="2" fill="#3a9a88"/><rect x="217.5" y="316" width="12" height="6" fill="#3a9a88"/><rect x="217.5" y="320" width="12" height="1.5" fill="#3a6f8a"/><rect x="218.5" y="315" width="10" height="1.5" fill="#3a6f8a"/><rect x="217" y="321" width="13" height="7" fill="#3a9a88"/><rect x="217" y="327" width="13" height="1.5" fill="#3a6f8a"/><rect x="217.5" y="321" width="12" height="1.2" fill="#3a6f8a"/>
<rect x="233" y="308" width="14" height="2" fill="#3a9a88"/><rect x="231" y="310" width="18" height="3" fill="#3a9a88"/><rect x="230" y="312" width="20" height="2" fill="#3a6f8a"/><rect x="229" y="314" width="22" height="6" fill="#3a6f8a"/><rect x="231" y="320" width="18" height="2" fill="#3a6f8a"/><rect x="234" y="322" width="12" height="2" fill="#3a6f8a"/><rect x="239.0" y="313" width="2" height="2" fill="#3a9a88"/>
<rect x="12.0" y="329" width="8" height="6" fill="#a07a52"/><rect x="13.0" y="333" width="6" height="2" fill="#dcb468"/><rect x="10" y="308" width="12" height="2" fill="#3a9a88"/><rect x="7" y="310" width="18" height="3" fill="#56c660"/><rect x="5" y="312" width="22" height="3" fill="#56c660"/><rect x="4" y="314" width="24" height="9" fill="#56c660"/><rect x="8" y="310" width="16" height="5" fill="#a8e87c"/><rect x="6" y="312" width="20" height="2" fill="#a8e87c"/><rect x="15.0" y="313" width="2" height="2" fill="#56c660"/><rect x="4" y="322" width="24" height="2" fill="#3a6f8a"/><rect x="5" y="323" width="22" height="4" fill="#3a9a88"/><rect x="7" y="326" width="18" height="2" fill="#3a9a88"/><rect x="9" y="322" width="2" height="2" fill="#3a9a88"/><rect x="15.0" y="321" width="2" height="2" fill="#3a9a88"/><rect x="21" y="322" width="2" height="2" fill="#3a9a88"/><rect x="5" y="326" width="2" height="1.5" fill="#3a6f8a"/><rect x="25" y="326" width="2" height="1.5" fill="#3a6f8a"/><rect x="8" y="328" width="16" height="1.5" fill="#3a6f8a"/><path d="M10,315h2v2h2v2h-2v2h-2v-2h-2v-2h2z" fill="#f4f4f4"/><rect x="10" y="317" width="2" height="2" fill="#e0b040"/><path d="M20,320h2v2h2v2h-2v2h-2v-2h-2v-2h2z" fill="#f4f4f4"/><rect x="20" y="322" width="2" height="2" fill="#e0b040"/>
<rect x="108.0" y="329" width="8" height="6" fill="#a07a52"/><rect x="109.0" y="333" width="6" height="2" fill="#dcb468"/><rect x="107" y="308" width="10" height="2" fill="#3a9a88"/><rect x="104" y="310" width="16" height="3" fill="#56c660"/><rect x="102" y="312" width="20" height="3" fill="#56c660"/><rect x="101" y="314" width="22" height="9" fill="#56c660"/><rect x="105" y="310" width="14" height="5" fill="#a8e87c"/><rect x="103" y="312" width="18" height="2" fill="#a8e87c"/><rect x="111.0" y="313" width="2" height="2" fill="#56c660"/><rect x="101" y="322" width="22" height="2" fill="#3a6f8a"/><rect x="102" y="323" width="20" height="4" fill="#3a9a88"/><rect x="104" y="326" width="16" height="2" fill="#3a9a88"/><rect x="106" y="322" width="2" height="2" fill="#3a9a88"/><rect x="111.0" y="321" width="2" height="2" fill="#3a9a88"/><rect x="116" y="322" width="2" height="2" fill="#3a9a88"/><rect x="102" y="326" width="2" height="1.5" fill="#3a6f8a"/><rect x="120" y="326" width="2" height="1.5" fill="#3a6f8a"/><rect x="105" y="328" width="14" height="1.5" fill="#3a6f8a"/>
<rect x="140.0" y="329" width="8" height="6" fill="#a07a52"/><rect x="141.0" y="333" width="6" height="2" fill="#dcb468"/><rect x="139" y="308" width="10" height="2" fill="#3a9a88"/><rect x="136" y="310" width="16" height="3" fill="#56c660"/><rect x="134" y="312" width="20" height="3" fill="#56c660"/><rect x="133" y="314" width="22" height="9" fill="#56c660"/><rect x="137" y="310" width="14" height="5" fill="#a8e87c"/><rect x="135" y="312" width="18" height="2" fill="#a8e87c"/><rect x="143.0" y="313" width="2" height="2" fill="#56c660"/><rect x="133" y="322" width="22" height="2" fill="#3a6f8a"/><rect x="134" y="323" width="20" height="4" fill="#3a9a88"/><rect x="136" y="326" width="16" height="2" fill="#3a9a88"/><rect x="138" y="322" width="2" height="2" fill="#3a9a88"/><rect x="143.0" y="321" width="2" height="2" fill="#3a9a88"/><rect x="148" y="322" width="2" height="2" fill="#3a9a88"/><rect x="134" y="326" width="2" height="1.5" fill="#3a6f8a"/><rect x="152" y="326" width="2" height="1.5" fill="#3a6f8a"/><rect x="137" y="328" width="14" height="1.5" fill="#3a6f8a"/>
<rect x="172.0" y="329" width="8" height="6" fill="#a07a52"/><rect x="173.0" y="333" width="6" height="2" fill="#dcb468"/><rect x="171" y="308" width="10" height="2" fill="#3a9a88"/><rect x="168" y="310" width="16" height="3" fill="#56c660"/><rect x="166" y="312" width="20" height="3" fill="#56c660"/><rect x="165" y="314" width="22" height="9" fill="#56c660"/><rect x="169" y="310" width="14" height="5" fill="#a8e87c"/><rect x="167" y="312" width="18" height="2" fill="#a8e87c"/><rect x="175.0" y="313" width="2" height="2" fill="#56c660"/><rect x="165" y="322" width="22" height="2" fill="#3a6f8a"/><rect x="166" y="323" width="20" height="4" fill="#3a9a88"/><rect x="168" y="326" width="16" height="2" fill="#3a9a88"/><rect x="170" y="322" width="2" height="2" fill="#3a9a88"/><rect x="175.0" y="321" width="2" height="2" fill="#3a9a88"/><rect x="180" y="322" width="2" height="2" fill="#3a9a88"/><rect x="166" y="326" width="2" height="1.5" fill="#3a6f8a"/><rect x="184" y="326" width="2" height="1.5" fill="#3a6f8a"/><rect x="169" y="328" width="14" height="1.5" fill="#3a6f8a"/><path d="M171,313h2v2h2v2h-2v2h-2v-2h-2v-2h2z" fill="#f4f4f4"/><rect x="171" y="315" width="2" height="2" fill="#e0b040"/><path d="M180,318h2v2h2v2h-2v2h-2v-2h-2v-2h2z" fill="#f4f4f4"/><rect x="180" y="320" width="2" height="2" fill="#e0b040"/>
<rect x="204.0" y="329" width="8" height="6" fill="#a07a52"/><rect x="205.0" y="333" width="6" height="2" fill="#dcb468"/><rect x="203" y="308" width="10" height="2" fill="#3a9a88"/><rect x="200" y="310" width="16" height="3" fill="#56c660"/><rect x="198" y="312" width="20" height="3" fill="#56c660"/><rect x="197" y="314" width="22" height="9" fill="#56c660"/><rect x="201" y="310" width="14" height="5" fill="#a8e87c"/><rect x="199" y="312" width="18" height="2" fill="#a8e87c"/><rect x="207.0" y="313" width="2" height="2" fill="#56c660"/><rect x="197" y="322" width="22" height="2" fill="#3a6f8a"/><rect x="198" y="323" width="20" height="4" fill="#3a9a88"/><rect x="200" y="326" width="16" height="2" fill="#3a9a88"/><rect x="202" y="322" width="2" height="2" fill="#3a9a88"/><rect x="207.0" y="321" width="2" height="2" fill="#3a9a88"/><rect x="212" y="322" width="2" height="2" fill="#3a9a88"/><rect x="198" y="326" width="2" height="1.5" fill="#3a6f8a"/><rect x="216" y="326" width="2" height="1.5" fill="#3a6f8a"/><rect x="201" y="328" width="14" height="1.5" fill="#3a6f8a"/>
<rect x="0" y="336" width="288" height="46" fill="#56c660"/>
<path d="M40,343h1v1h1v1h1v-1h1v-1h1v1h-1v1h-1v1h-1v-1h-1v-1h-1z" fill="#3a9a88"/>
<path d="M58,350h1v1h1v1h1v-1h1v-1h1v1h-1v1h-1v1h-1v-1h-1v-1h-1z" fill="#3a9a88"/>
<path d="M26,358h1v1h1v1h1v-1h1v-1h1v1h-1v1h-1v1h-1v-1h-1v-1h-1z" fill="#3a9a88"/>
<path d="M75,350h1v1h1v1h1v-1h1v-1h1v1h-1v1h-1v1h-1v-1h-1v-1h-1z" fill="#3a9a88"/>
<path d="M92,343h1v1h1v1h1v-1h1v-1h1v1h-1v1h-1v1h-1v-1h-1v-1h-1z" fill="#3a9a88"/>
<path d="M110,350h1v1h1v1h1v-1h1v-1h1v1h-1v1h-1v1h-1v-1h-1v-1h-1z" fill="#3a9a88"/>
<path d="M128,343h1v1h1v1h1v-1h1v-1h1v1h-1v1h-1v1h-1v-1h-1v-1h-1z" fill="#3a9a88"/>
<path d="M140,358h1v1h1v1h1v-1h1v-1h1v1h-1v1h-1v1h-1v-1h-1v-1h-1z" fill="#3a9a88"/>
<path d="M196,343h1v1h1v1h1v-1h1v-1h1v1h-1v1h-1v1h-1v-1h-1v-1h-1z" fill="#3a9a88"/>
<path d="M214,350h1v1h1v1h1v-1h1v-1h1v1h-1v1h-1v1h-1v-1h-1v-1h-1z" fill="#3a9a88"/>
<path d="M231,358h1v1h1v1h1v-1h1v-1h1v1h-1v1h-1v1h-1v-1h-1v-1h-1z" fill="#3a9a88"/>
<path d="M250,343h1v1h1v1h1v-1h1v-1h1v1h-1v1h-1v1h-1v-1h-1v-1h-1z" fill="#3a9a88"/>
<path d="M266,350h1v1h1v1h1v-1h1v-1h1v1h-1v1h-1v1h-1v-1h-1v-1h-1z" fill="#3a9a88"/>
<path d="M12,368h1v1h1v1h1v-1h1v-1h1v1h-1v1h-1v1h-1v-1h-1v-1h-1z" fill="#3a9a88"/>
<path d="M60,368h1v1h1v1h1v-1h1v-1h1v1h-1v1h-1v1h-1v-1h-1v-1h-1z" fill="#3a9a88"/>
<path d="M110,368h1v1h1v1h1v-1h1v-1h1v1h-1v1h-1v1h-1v-1h-1v-1h-1z" fill="#3a9a88"/>
<path d="M160,370h1v1h1v1h1v-1h1v-1h1v1h-1v1h-1v1h-1v-1h-1v-1h-1z" fill="#3a9a88"/>
<path d="M210,368h1v1h1v1h1v-1h1v-1h1v1h-1v1h-1v1h-1v-1h-1v-1h-1z" fill="#3a9a88"/>
<path d="M252,370h1v1h1v1h1v-1h1v-1h1v1h-1v1h-1v1h-1v-1h-1v-1h-1z" fill="#3a9a88"/>
<path d="M90,362h1v1h1v1h1v-1h1v-1h1v1h-1v1h-1v1h-1v-1h-1v-1h-1z" fill="#3a9a88"/>
<path d="M190,362h1v1h1v1h1v-1h1v-1h1v1h-1v1h-1v1h-1v-1h-1v-1h-1z" fill="#3a9a88"/>
<rect x="0" y="379" width="288" height="37" fill="#3c8f80"/>
<rect x="1" y="376" width="1" height="3" fill="#3c8f80"/>
<rect x="3" y="377" width="1" height="2" fill="#3c8f80"/>
<rect x="2" y="379" width="1" height="3" fill="#56c660"/>
<rect x="5" y="376" width="1" height="3" fill="#3c8f80"/>
<rect x="7" y="378" width="1" height="2" fill="#3c8f80"/>
<rect x="6" y="379" width="1" height="2" fill="#56c660"/>
<rect x="9" y="376" width="1" height="3" fill="#3c8f80"/>
<rect x="11" y="377" width="1" height="2" fill="#3c8f80"/>
<rect x="10" y="379" width="1" height="3" fill="#56c660"/>
<rect x="13" y="376" width="1" height="3" fill="#3c8f80"/>
<rect x="15" y="378" width="1" height="2" fill="#3c8f80"/>
<rect x="14" y="379" width="1" height="2" fill="#56c660"/>
<rect x="17" y="376" width="1" height="3" fill="#3c8f80"/>
<rect x="19" y="377" width="1" height="2" fill="#3c8f80"/>
<rect x="18" y="379" width="1" height="3" fill="#56c660"/>
<rect x="21" y="376" width="1" height="3" fill="#3c8f80"/>
<rect x="23" y="378" width="1" height="2" fill="#3c8f80"/>
<rect x="22" y="379" width="1" height="2" fill="#56c660"/>
<rect x="25" y="376" width="1" height="3" fill="#3c8f80"/>
<rect x="27" y="377" width="1" height="2" fill="#3c8f80"/>
<rect x="26" y="379" width="1" height="3" fill="#56c660"/>
<rect x="29" y="376" width="1" height="3" fill="#3c8f80"/>
<rect x="31" y="378" width="1" height="2" fill="#3c8f80"/>
<rect x="30" y="379" width="1" height="2" fill="#56c660"/>
<rect x="33" y="376" width="1" height="3" fill="#3c8f80"/>
<rect x="35" y="377" width="1" height="2" fill="#3c8f80"/>
<rect x="34" y="379" width="1" height="3" fill="#56c660"/>
<rect x="37" y="376" width="1" height="3" fill="#3c8f80"/>
<rect x="39" y="378" width="1" height="2" fill="#3c8f80"/>
<rect x="38" y="379" width="1" height="2" fill="#56c660"/>
<rect x="41" y="376" width="1" height="3" fill="#3c8f80"/>
<rect x="43" y="377" width="1" height="2" fill="#3c8f80"/>
<rect x="42" y="379" width="1" height="3" fill="#56c660"/>
<rect x="45" y="376" width="1" height="3" fill="#3c8f80"/>
<rect x="47" y="378" width="1" height="2" fill="#3c8f80"/>
<rect x="46" y="379" width="1" height="2" fill="#56c660"/>
<rect x="49" y="376" width="1" height="3" fill="#3c8f80"/>
<rect x="51" y="377" width="1" height="2" fill="#3c8f80"/>
<rect x="50" y="379" width="1" height="3" fill="#56c660"/>
<rect x="53" y="376" width="1" height="3" fill="#3c8f80"/>
<rect x="55" y="378" width="1" height="2" fill="#3c8f80"/>
<rect x="54" y="379" width="1" height="2" fill="#56c660"/>
<rect x="57" y="376" width="1" height="3" fill="#3c8f80"/>
<rect x="59" y="377" width="1" height="2" fill="#3c8f80"/>
<rect x="58" y="379" width="1" height="3" fill="#56c660"/>
<rect x="61" y="376" width="1" height="3" fill="#3c8f80"/>
<rect x="63" y="378" width="1" height="2" fill="#3c8f80"/>
<rect x="62" y="379" width="1" height="2" fill="#56c660"/>
<rect x="65" y="376" width="1" height="3" fill="#3c8f80"/>
<rect x="67" y="377" width="1" height="2" fill="#3c8f80"/>
<rect x="66" y="379" width="1" height="3" fill="#56c660"/>
<rect x="69" y="376" width="1" height="3" fill="#3c8f80"/>
<rect x="71" y="378" width="1" height="2" fill="#3c8f80"/>
<rect x="70" y="379" width="1" height="2" fill="#56c660"/>
<rect x="73" y="376" width="1" height="3" fill="#3c8f80"/>
<rect x="75" y="377" width="1" height="2" fill="#3c8f80"/>
<rect x="74" y="379" width="1" height="3" fill="#56c660"/>
<rect x="77" y="376" width="1" height="3" fill="#3c8f80"/>
<rect x="79" y="378" width="1" height="2" fill="#3c8f80"/>
<rect x="78" y="379" width="1" height="2" fill="#56c660"/>
<rect x="81" y="376" width="1" height="3" fill="#3c8f80"/>
<rect x="83" y="377" width="1" height="2" fill="#3c8f80"/>
<rect x="82" y="379" width="1" height="3" fill="#56c660"/>
<rect x="85" y="376" width="1" height="3" fill="#3c8f80"/>
<rect x="87" y="378" width="1" height="2" fill="#3c8f80"/>
<rect x="86" y="379" width="1" height="2" fill="#56c660"/>
<rect x="89" y="376" width="1" height="3" fill="#3c8f80"/>
<rect x="91" y="377" width="1" height="2" fill="#3c8f80"/>
<rect x="90" y="379" width="1" height="3" fill="#56c660"/>
<rect x="93" y="376" width="1" height="3" fill="#3c8f80"/>
<rect x="95" y="378" width="1" height="2" fill="#3c8f80"/>
<rect x="94" y="379" width="1" height="2" fill="#56c660"/>
<rect x="97" y="376" width="1" height="3" fill="#3c8f80"/>
<rect x="99" y="377" width="1" height="2" fill="#3c8f80"/>
<rect x="98" y="379" width="1" height="3" fill="#56c660"/>
<rect x="101" y="376" width="1" height="3" fill="#3c8f80"/>
<rect x="103" y="378" width="1" height="2" fill="#3c8f80"/>
<rect x="102" y="379" width="1" height="2" fill="#56c660"/>
<rect x="105" y="376" width="1" height="3" fill="#3c8f80"/>
<rect x="107" y="377" width="1" height="2" fill="#3c8f80"/>
<rect x="106" y="379" width="1" height="3" fill="#56c660"/>
<rect x="109" y="376" width="1" height="3" fill="#3c8f80"/>
<rect x="111" y="378" width="1" height="2" fill="#3c8f80"/>
<rect x="110" y="379" width="1" height="2" fill="#56c660"/>
<rect x="113" y="376" width="1" height="3" fill="#3c8f80"/>
<rect x="115" y="377" width="1" height="2" fill="#3c8f80"/>
<rect x="114" y="379" width="1" height="3" fill="#56c660"/>
<rect x="117" y="376" width="1" height="3" fill="#3c8f80"/>
<rect x="119" y="378" width="1" height="2" fill="#3c8f80"/>
<rect x="118" y="379" width="1" height="2" fill="#56c660"/>
<rect x="121" y="376" width="1" height="3" fill="#3c8f80"/>
<rect x="123" y="377" width="1" height="2" fill="#3c8f80"/>
<rect x="122" y="379" width="1" height="3" fill="#56c660"/>
<rect x="125" y="376" width="1" height="3" fill="#3c8f80"/>
<rect x="127" y="378" width="1" height="2" fill="#3c8f80"/>
<rect x="126" y="379" width="1" height="2" fill="#56c660"/>
<rect x="129" y="376" width="1" height="3" fill="#3c8f80"/>
<rect x="131" y="377" width="1" height="2" fill="#3c8f80"/>
<rect x="130" y="379" width="1" height="3" fill="#56c660"/>
<rect x="133" y="376" width="1" height="3" fill="#3c8f80"/>
<rect x="135" y="378" width="1" height="2" fill="#3c8f80"/>
<rect x="134" y="379" width="1" height="2" fill="#56c660"/>
<rect x="137" y="376" width="1" height="3" fill="#3c8f80"/>
<rect x="139" y="377" width="1" height="2" fill="#3c8f80"/>
<rect x="138" y="379" width="1" height="3" fill="#56c660"/>
<rect x="141" y="376" width="1" height="3" fill="#3c8f80"/>
<rect x="143" y="378" width="1" height="2" fill="#3c8f80"/>
<rect x="142" y="379" width="1" height="2" fill="#56c660"/>
<rect x="145" y="376" width="1" height="3" fill="#3c8f80"/>
<rect x="147" y="377" width="1" height="2" fill="#3c8f80"/>
<rect x="146" y="379" width="1" height="3" fill="#56c660"/>
<rect x="149" y="376" width="1" height="3" fill="#3c8f80"/>
<rect x="151" y="378" width="1" height="2" fill="#3c8f80"/>
<rect x="150" y="379" width="1" height="2" fill="#56c660"/>
<rect x="153" y="376" width="1" height="3" fill="#3c8f80"/>
<rect x="155" y="377" width="1" height="2" fill="#3c8f80"/>
<rect x="154" y="379" width="1" height="3" fill="#56c660"/>
<rect x="157" y="376" width="1" height="3" fill="#3c8f80"/>
<rect x="159" y="378" width="1" height="2" fill="#3c8f80"/>
<rect x="158" y="379" width="1" height="2" fill="#56c660"/>
<rect x="161" y="376" width="1" height="3" fill="#3c8f80"/>
<rect x="163" y="377" width="1" height="2" fill="#3c8f80"/>
<rect x="162" y="379" width="1" height="3" fill="#56c660"/>
<rect x="165" y="376" width="1" height="3" fill="#3c8f80"/>
<rect x="167" y="378" width="1" height="2" fill="#3c8f80"/>
<rect x="166" y="379" width="1" height="2" fill="#56c660"/>
<rect x="169" y="376" width="1" height="3" fill="#3c8f80"/>
<rect x="171" y="377" width="1" height="2" fill="#3c8f80"/>
<rect x="170" y="379" width="1" height="3" fill="#56c660"/>
<rect x="173" y="376" width="1" height="3" fill="#3c8f80"/>
<rect x="175" y="378" width="1" height="2" fill="#3c8f80"/>
<rect x="174" y="379" width="1" height="2" fill="#56c660"/>
<rect x="177" y="376" width="1" height="3" fill="#3c8f80"/>
<rect x="179" y="377" width="1" height="2" fill="#3c8f80"/>
<rect x="178" y="379" width="1" height="3" fill="#56c660"/>
<rect x="181" y="376" width="1" height="3" fill="#3c8f80"/>
<rect x="183" y="378" width="1" height="2" fill="#3c8f80"/>
<rect x="182" y="379" width="1" height="2" fill="#56c660"/>
<rect x="185" y="376" width="1" height="3" fill="#3c8f80"/>
<rect x="187" y="377" width="1" height="2" fill="#3c8f80"/>
<rect x="186" y="379" width="1" height="3" fill="#56c660"/>
<rect x="189" y="376" width="1" height="3" fill="#3c8f80"/>
<rect x="191" y="378" width="1" height="2" fill="#3c8f80"/>
<rect x="190" y="379" width="1" height="2" fill="#56c660"/>
<rect x="193" y="376" width="1" height="3" fill="#3c8f80"/>
<rect x="195" y="377" width="1" height="2" fill="#3c8f80"/>
<rect x="194" y="379" width="1" height="3" fill="#56c660"/>
<rect x="197" y="376" width="1" height="3" fill="#3c8f80"/>
<rect x="199" y="378" width="1" height="2" fill="#3c8f80"/>
<rect x="198" y="379" width="1" height="2" fill="#56c660"/>
<rect x="201" y="376" width="1" height="3" fill="#3c8f80"/>
<rect x="203" y="377" width="1" height="2" fill="#3c8f80"/>
<rect x="202" y="379" width="1" height="3" fill="#56c660"/>
<rect x="205" y="376" width="1" height="3" fill="#3c8f80"/>
<rect x="207" y="378" width="1" height="2" fill="#3c8f80"/>
<rect x="206" y="379" width="1" height="2" fill="#56c660"/>
<rect x="209" y="376" width="1" height="3" fill="#3c8f80"/>
<rect x="211" y="377" width="1" height="2" fill="#3c8f80"/>
<rect x="210" y="379" width="1" height="3" fill="#56c660"/>
<rect x="213" y="376" width="1" height="3" fill="#3c8f80"/>
<rect x="215" y="378" width="1" height="2" fill="#3c8f80"/>
<rect x="214" y="379" width="1" height="2" fill="#56c660"/>
<rect x="217" y="376" width="1" height="3" fill="#3c8f80"/>
<rect x="219" y="377" width="1" height="2" fill="#3c8f80"/>
<rect x="218" y="379" width="1" height="3" fill="#56c660"/>
<rect x="221" y="376" width="1" height="3" fill="#3c8f80"/>
<rect x="223" y="378" width="1" height="2" fill="#3c8f80"/>
<rect x="222" y="379" width="1" height="2" fill="#56c660"/>
<rect x="225" y="376" width="1" height="3" fill="#3c8f80"/>
<rect x="227" y="377" width="1" height="2" fill="#3c8f80"/>
<rect x="226" y="379" width="1" height="3" fill="#56c660"/>
<rect x="229" y="376" width="1" height="3" fill="#3c8f80"/>
<rect x="231" y="378" width="1" height="2" fill="#3c8f80"/>
<rect x="230" y="379" width="1" height="2" fill="#56c660"/>
<rect x="233" y="376" width="1" height="3" fill="#3c8f80"/>
<rect x="235" y="377" width="1" height="2" fill="#3c8f80"/>
<rect x="234" y="379" width="1" height="3" fill="#56c660"/>
<rect x="237" y="376" width="1" height="3" fill="#3c8f80"/>
<rect x="239" y="378" width="1" height="2" fill="#3c8f80"/>
<rect x="238" y="379" width="1" height="2" fill="#56c660"/>
<rect x="241" y="376" width="1" height="3" fill="#3c8f80"/>
<rect x="243" y="377" width="1" height="2" fill="#3c8f80"/>
<rect x="242" y="379" width="1" height="3" fill="#56c660"/>
<rect x="245" y="376" width="1" height="3" fill="#3c8f80"/>
<rect x="247" y="378" width="1" height="2" fill="#3c8f80"/>
<rect x="246" y="379" width="1" height="2" fill="#56c660"/>
<rect x="249" y="376" width="1" height="3" fill="#3c8f80"/>
<rect x="251" y="377" width="1" height="2" fill="#3c8f80"/>
<rect x="250" y="379" width="1" height="3" fill="#56c660"/>
<rect x="253" y="376" width="1" height="3" fill="#3c8f80"/>
<rect x="255" y="378" width="1" height="2" fill="#3c8f80"/>
<rect x="254" y="379" width="1" height="2" fill="#56c660"/>
<rect x="257" y="376" width="1" height="3" fill="#3c8f80"/>
<rect x="259" y="377" width="1" height="2" fill="#3c8f80"/>
<rect x="258" y="379" width="1" height="3" fill="#56c660"/>
<rect x="261" y="376" width="1" height="3" fill="#3c8f80"/>
<rect x="263" y="378" width="1" height="2" fill="#3c8f80"/>
<rect x="262" y="379" width="1" height="2" fill="#56c660"/>
<rect x="265" y="376" width="1" height="3" fill="#3c8f80"/>
<rect x="267" y="377" width="1" height="2" fill="#3c8f80"/>
<rect x="266" y="379" width="1" height="3" fill="#56c660"/>
<rect x="269" y="376" width="1" height="3" fill="#3c8f80"/>
<rect x="271" y="378" width="1" height="2" fill="#3c8f80"/>
<rect x="270" y="379" width="1" height="2" fill="#56c660"/>
<rect x="273" y="376" width="1" height="3" fill="#3c8f80"/>
<rect x="275" y="377" width="1" height="2" fill="#3c8f80"/>
<rect x="274" y="379" width="1" height="3" fill="#56c660"/>
<rect x="277" y="376" width="1" height="3" fill="#3c8f80"/>
<rect x="279" y="378" width="1" height="2" fill="#3c8f80"/>
<rect x="278" y="379" width="1" height="2" fill="#56c660"/>
<rect x="281" y="376" width="1" height="3" fill="#3c8f80"/>
<rect x="283" y="377" width="1" height="2" fill="#3c8f80"/>
<rect x="282" y="379" width="1" height="3" fill="#56c660"/>
<rect x="285" y="376" width="1" height="3" fill="#3c8f80"/>
<rect x="287" y="378" width="1" height="2" fill="#3c8f80"/>
<rect x="286" y="379" width="1" height="2" fill="#56c660"/>
<rect x="-7" y="362" width="15" height="7" fill="#3a9a88"/><rect x="-9" y="364" width="19" height="4" fill="#3a9a88"/><rect x="-3.5" y="356" width="8" height="6" fill="#a07a52"/><rect x="-2.5" y="360" width="6" height="2" fill="#dcb468"/><rect x="-13" y="341" width="27" height="9" fill="#3a6f8a"/><rect x="-9" y="336" width="19" height="4" fill="#3a6f8a"/><rect x="-11" y="338" width="23" height="4" fill="#3a6f8a"/><rect x="-6" y="335" width="13" height="2" fill="#3a9a88"/><rect x="-9" y="337" width="19" height="3" fill="#56c660"/><rect x="-11" y="339" width="23" height="3" fill="#56c660"/><rect x="-12" y="341" width="25" height="9" fill="#56c660"/><rect x="-8" y="337" width="17" height="5" fill="#a8e87c"/><rect x="-10" y="339" width="21" height="2" fill="#a8e87c"/><rect x="-0.5" y="340" width="2" height="2" fill="#56c660"/><rect x="-12" y="349" width="25" height="2" fill="#3a6f8a"/><rect x="-11" y="350" width="23" height="4" fill="#3a9a88"/><rect x="-9" y="353" width="19" height="2" fill="#3a9a88"/><rect x="-7" y="349" width="2" height="2" fill="#3a9a88"/><rect x="-0.5" y="348" width="2" height="2" fill="#3a9a88"/><rect x="6" y="349" width="2" height="2" fill="#3a9a88"/><rect x="-11" y="353" width="2" height="1.5" fill="#3a6f8a"/><rect x="10" y="353" width="2" height="1.5" fill="#3a6f8a"/><rect x="-8" y="355" width="17" height="1.5" fill="#3a6f8a"/>
<rect x="185" y="360" width="15" height="7" fill="#3a9a88"/><rect x="183" y="362" width="19" height="4" fill="#3a9a88"/><rect x="188.5" y="354" width="8" height="6" fill="#a07a52"/><rect x="189.5" y="358" width="6" height="2" fill="#dcb468"/><rect x="179" y="339" width="27" height="9" fill="#3a6f8a"/><rect x="183" y="334" width="19" height="4" fill="#3a6f8a"/><rect x="181" y="336" width="23" height="4" fill="#3a6f8a"/><rect x="186" y="333" width="13" height="2" fill="#3a9a88"/><rect x="183" y="335" width="19" height="3" fill="#56c660"/><rect x="181" y="337" width="23" height="3" fill="#56c660"/><rect x="180" y="339" width="25" height="9" fill="#56c660"/><rect x="184" y="335" width="17" height="5" fill="#a8e87c"/><rect x="182" y="337" width="21" height="2" fill="#a8e87c"/><rect x="191.5" y="338" width="2" height="2" fill="#56c660"/><rect x="180" y="347" width="25" height="2" fill="#3a6f8a"/><rect x="181" y="348" width="23" height="4" fill="#3a9a88"/><rect x="183" y="351" width="19" height="2" fill="#3a9a88"/><rect x="185" y="347" width="2" height="2" fill="#3a9a88"/><rect x="191.5" y="346" width="2" height="2" fill="#3a9a88"/><rect x="198" y="347" width="2" height="2" fill="#3a9a88"/><rect x="181" y="351" width="2" height="1.5" fill="#3a6f8a"/><rect x="202" y="351" width="2" height="1.5" fill="#3a6f8a"/><rect x="184" y="353" width="17" height="1.5" fill="#3a6f8a"/>
<rect x="234" y="347" width="15" height="7" fill="#3a9a88"/><rect x="232" y="349" width="19" height="4" fill="#3a9a88"/><rect x="237.5" y="341" width="8" height="6" fill="#a07a52"/><rect x="238.5" y="345" width="6" height="2" fill="#dcb468"/><rect x="228" y="326" width="27" height="9" fill="#3a6f8a"/><rect x="232" y="321" width="19" height="4" fill="#3a6f8a"/><rect x="230" y="323" width="23" height="4" fill="#3a6f8a"/><rect x="235" y="320" width="13" height="2" fill="#3a9a88"/><rect x="232" y="322" width="19" height="3" fill="#56c660"/><rect x="230" y="324" width="23" height="3" fill="#56c660"/><rect x="229" y="326" width="25" height="9" fill="#56c660"/><rect x="233" y="322" width="17" height="5" fill="#a8e87c"/><rect x="231" y="324" width="21" height="2" fill="#a8e87c"/><rect x="240.5" y="325" width="2" height="2" fill="#56c660"/><rect x="229" y="334" width="25" height="2" fill="#3a6f8a"/><rect x="230" y="335" width="23" height="4" fill="#3a9a88"/><rect x="232" y="338" width="19" height="2" fill="#3a9a88"/><rect x="234" y="334" width="2" height="2" fill="#3a9a88"/><rect x="240.5" y="333" width="2" height="2" fill="#3a9a88"/><rect x="247" y="334" width="2" height="2" fill="#3a9a88"/><rect x="230" y="338" width="2" height="1.5" fill="#3a6f8a"/><rect x="251" y="338" width="2" height="1.5" fill="#3a6f8a"/><rect x="233" y="340" width="17" height="1.5" fill="#3a6f8a"/><path d="M234,324h2v2h2v2h-2v2h-2v-2h-2v-2h2z" fill="#f4f4f4"/><rect x="234" y="326" width="2" height="2" fill="#e0b040"/><path d="M244,330h2v2h2v2h-2v2h-2v-2h-2v-2h2z" fill="#f4f4f4"/><rect x="244" y="332" width="2" height="2" fill="#e0b040"/>
<rect x="280" y="362" width="15" height="7" fill="#3a9a88"/><rect x="278" y="364" width="19" height="4" fill="#3a9a88"/><rect x="283.5" y="356" width="8" height="6" fill="#a07a52"/><rect x="284.5" y="360" width="6" height="2" fill="#dcb468"/><rect x="274" y="341" width="27" height="9" fill="#3a6f8a"/><rect x="278" y="336" width="19" height="4" fill="#3a6f8a"/><rect x="276" y="338" width="23" height="4" fill="#3a6f8a"/><rect x="281" y="335" width="13" height="2" fill="#3a9a88"/><rect x="278" y="337" width="19" height="3" fill="#56c660"/><rect x="276" y="339" width="23" height="3" fill="#56c660"/><rect x="275" y="341" width="25" height="9" fill="#56c660"/><rect x="279" y="337" width="17" height="5" fill="#a8e87c"/><rect x="277" y="339" width="21" height="2" fill="#a8e87c"/><rect x="286.5" y="340" width="2" height="2" fill="#56c660"/><rect x="275" y="349" width="25" height="2" fill="#3a6f8a"/><rect x="276" y="350" width="23" height="4" fill="#3a9a88"/><rect x="278" y="353" width="19" height="2" fill="#3a9a88"/><rect x="280" y="349" width="2" height="2" fill="#3a9a88"/><rect x="286.5" y="348" width="2" height="2" fill="#3a9a88"/><rect x="293" y="349" width="2" height="2" fill="#3a9a88"/><rect x="276" y="353" width="2" height="1.5" fill="#3a6f8a"/><rect x="297" y="353" width="2" height="1.5" fill="#3a6f8a"/><rect x="279" y="355" width="17" height="1.5" fill="#3a6f8a"/>
<rect x="148" y="341" width="20" height="7" fill="#3a9a88"/><rect x="150" y="340" width="16" height="9" fill="#3a9a88"/><rect x="154" y="341" width="8" height="5" fill="#a07a52"/><rect x="155" y="344" width="6" height="2" fill="#dcb468"/><rect x="156" y="314" width="4" height="2" fill="#3a6f8a"/><rect x="155" y="316" width="6" height="4" fill="#3a9a88"/><rect x="154" y="318" width="1" height="2" fill="#3a6f8a"/><rect x="161" y="318" width="1" height="2" fill="#3a6f8a"/><rect x="153" y="320" width="10" height="2" fill="#3a6f8a"/><rect x="151" y="322" width="14" height="5" fill="#3a9a88"/><rect x="150" y="323" width="1" height="3" fill="#3a6f8a"/><rect x="165" y="323" width="1" height="3" fill="#3a6f8a"/><rect x="154" y="321" width="8" height="3" fill="#56c660"/><rect x="147" y="327" width="22" height="10" fill="#3a9a88"/><rect x="146" y="329" width="24" height="6" fill="#3a9a88"/><rect x="145" y="330" width="1" height="4" fill="#3a6f8a"/><rect x="170" y="330" width="1" height="4" fill="#3a6f8a"/><rect x="149" y="330" width="7" height="1.5" fill="#3a6f8a"/><rect x="160" y="330" width="7" height="1.5" fill="#3a6f8a"/><rect x="157" y="328" width="2" height="2" fill="#3a6f8a"/><rect x="147" y="337" width="22" height="2" fill="#24503f"/><rect x="151" y="339" width="14" height="2" fill="#24503f"/>
<rect x="100" y="378" width="20" height="7" fill="#3a9a88"/><rect x="102" y="377" width="16" height="9" fill="#3a9a88"/><rect x="106" y="378" width="8" height="5" fill="#a07a52"/><rect x="107" y="381" width="6" height="2" fill="#dcb468"/><rect x="108" y="351" width="4" height="2" fill="#3a6f8a"/><rect x="107" y="353" width="6" height="4" fill="#3a9a88"/><rect x="106" y="355" width="1" height="2" fill="#3a6f8a"/><rect x="113" y="355" width="1" height="2" fill="#3a6f8a"/><rect x="105" y="357" width="10" height="2" fill="#3a6f8a"/><rect x="103" y="359" width="14" height="5" fill="#3a9a88"/><rect x="102" y="360" width="1" height="3" fill="#3a6f8a"/><rect x="117" y="360" width="1" height="3" fill="#3a6f8a"/><rect x="106" y="358" width="8" height="3" fill="#56c660"/><rect x="99" y="364" width="22" height="10" fill="#3a9a88"/><rect x="98" y="366" width="24" height="6" fill="#3a9a88"/><rect x="97" y="367" width="1" height="4" fill="#3a6f8a"/><rect x="122" y="367" width="1" height="4" fill="#3a6f8a"/><rect x="101" y="367" width="7" height="1.5" fill="#3a6f8a"/><rect x="112" y="367" width="7" height="1.5" fill="#3a6f8a"/><rect x="109" y="365" width="2" height="2" fill="#3a6f8a"/><rect x="99" y="374" width="22" height="2" fill="#24503f"/><rect x="103" y="376" width="14" height="2" fill="#24503f"/>
<path d="M19,347h2v2h2v2h-2v2h-2v-2h-2v-2h2z" fill="#f4f4f4"/><rect x="19" y="349" width="2" height="2" fill="#e0b040"/>
<path d="M25,343h2v2h2v2h-2v2h-2v-2h-2v-2h2z" fill="#f4f4f4"/><rect x="25" y="345" width="2" height="2" fill="#e0b040"/>
<path d="M51,347h2v2h2v2h-2v2h-2v-2h-2v-2h2z" fill="#f4f4f4"/><rect x="51" y="349" width="2" height="2" fill="#e0b040"/>
<path d="M57,343h2v2h2v2h-2v2h-2v-2h-2v-2h2z" fill="#f4f4f4"/><rect x="57" y="345" width="2" height="2" fill="#e0b040"/>
<path d="M68,363h2v2h2v2h-2v2h-2v-2h-2v-2h2z" fill="#f4f4f4"/><rect x="68" y="365" width="2" height="2" fill="#e0b040"/>
<path d="M74,359h2v2h2v2h-2v2h-2v-2h-2v-2h2z" fill="#f4f4f4"/><rect x="74" y="361" width="2" height="2" fill="#e0b040"/>
<path d="M151,359h2v2h2v2h-2v2h-2v-2h-2v-2h2z" fill="#f4f4f4"/><rect x="151" y="361" width="2" height="2" fill="#e0b040"/>
<path d="M159,355h2v2h2v2h-2v2h-2v-2h-2v-2h2z" fill="#f4f4f4"/><rect x="159" y="357" width="2" height="2" fill="#e0b040"/>
<path d="M199,343h2v2h2v2h-2v2h-2v-2h-2v-2h2z" fill="#f4f4f4"/><rect x="199" y="345" width="2" height="2" fill="#e0b040"/>
<path d="M207,339h2v2h2v2h-2v2h-2v-2h-2v-2h2z" fill="#f4f4f4"/><rect x="207" y="341" width="2" height="2" fill="#e0b040"/>
<path d="M245,367h2v2h2v2h-2v2h-2v-2h-2v-2h2z" fill="#f4f4f4"/><rect x="245" y="369" width="2" height="2" fill="#e0b040"/>
<path d="M253,363h2v2h2v2h-2v2h-2v-2h-2v-2h2z" fill="#f4f4f4"/><rect x="253" y="365" width="2" height="2" fill="#e0b040"/>
<path d="M275,359h2v2h2v2h-2v2h-2v-2h-2v-2h2z" fill="#f4f4f4"/><rect x="275" y="361" width="2" height="2" fill="#e0b040"/>
<path d="M283,355h2v2h2v2h-2v2h-2v-2h-2v-2h2z" fill="#f4f4f4"/><rect x="283" y="357" width="2" height="2" fill="#e0b040"/>
<path d="M5,347h2v2h2v2h-2v2h-2v-2h-2v-2h2z" fill="#f4f4f4"/><rect x="5" y="349" width="2" height="2" fill="#e0b040"/></g></defs>
<g clip-path="url(#vc)"><use href="#pview"/><rect x="0" y="352" width="288" height="2" fill="#18121c"/>
<rect x="0" y="354" width="288" height="62" fill="#d4805a"/>
<rect x="0" y="354" width="288" height="12" fill="#80c43a"/>
<rect x="0" y="354" width="288" height="2.5" fill="#dce848"/>
<rect x="0" y="356" width="9" height="2" fill="#dce848"/><rect x="9" y="356" width="7" height="1" fill="#b4d848"/>
<rect x="1" y="360" width="2" height="4" fill="#3a9048"/><rect x="1.5" y="359" width="1" height="1" fill="#3a9048"/>
<rect x="5" y="360" width="2" height="4" fill="#3a9048"/><rect x="5.5" y="359" width="1" height="1" fill="#3a9048"/>
<rect x="10" y="361" width="3" height="3" fill="#3a9048"/><rect x="11" y="360" width="1" height="1" fill="#3a9048"/>
<rect x="16" y="356" width="9" height="2" fill="#dce848"/><rect x="25" y="356" width="7" height="1" fill="#b4d848"/>
<rect x="17" y="360" width="2" height="4" fill="#3a9048"/><rect x="17.5" y="359" width="1" height="1" fill="#3a9048"/>
<rect x="21" y="360" width="2" height="4" fill="#3a9048"/><rect x="21.5" y="359" width="1" height="1" fill="#3a9048"/>
<rect x="26" y="361" width="3" height="3" fill="#3a9048"/><rect x="27" y="360" width="1" height="1" fill="#3a9048"/>
<rect x="32" y="356" width="9" height="2" fill="#dce848"/><rect x="41" y="356" width="7" height="1" fill="#b4d848"/>
<rect x="33" y="360" width="2" height="4" fill="#3a9048"/><rect x="33.5" y="359" width="1" height="1" fill="#3a9048"/>
<rect x="37" y="360" width="2" height="4" fill="#3a9048"/><rect x="37.5" y="359" width="1" height="1" fill="#3a9048"/>
<rect x="42" y="361" width="3" height="3" fill="#3a9048"/><rect x="43" y="360" width="1" height="1" fill="#3a9048"/>
<rect x="48" y="356" width="9" height="2" fill="#dce848"/><rect x="57" y="356" width="7" height="1" fill="#b4d848"/>
<rect x="49" y="360" width="2" height="4" fill="#3a9048"/><rect x="49.5" y="359" width="1" height="1" fill="#3a9048"/>
<rect x="53" y="360" width="2" height="4" fill="#3a9048"/><rect x="53.5" y="359" width="1" height="1" fill="#3a9048"/>
<rect x="58" y="361" width="3" height="3" fill="#3a9048"/><rect x="59" y="360" width="1" height="1" fill="#3a9048"/>
<rect x="64" y="356" width="9" height="2" fill="#dce848"/><rect x="73" y="356" width="7" height="1" fill="#b4d848"/>
<rect x="65" y="360" width="2" height="4" fill="#3a9048"/><rect x="65.5" y="359" width="1" height="1" fill="#3a9048"/>
<rect x="69" y="360" width="2" height="4" fill="#3a9048"/><rect x="69.5" y="359" width="1" height="1" fill="#3a9048"/>
<rect x="74" y="361" width="3" height="3" fill="#3a9048"/><rect x="75" y="360" width="1" height="1" fill="#3a9048"/>
<rect x="80" y="356" width="9" height="2" fill="#dce848"/><rect x="89" y="356" width="7" height="1" fill="#b4d848"/>
<rect x="81" y="360" width="2" height="4" fill="#3a9048"/><rect x="81.5" y="359" width="1" height="1" fill="#3a9048"/>
<rect x="85" y="360" width="2" height="4" fill="#3a9048"/><rect x="85.5" y="359" width="1" height="1" fill="#3a9048"/>
<rect x="90" y="361" width="3" height="3" fill="#3a9048"/><rect x="91" y="360" width="1" height="1" fill="#3a9048"/>
<rect x="96" y="356" width="9" height="2" fill="#dce848"/><rect x="105" y="356" width="7" height="1" fill="#b4d848"/>
<rect x="97" y="360" width="2" height="4" fill="#3a9048"/><rect x="97.5" y="359" width="1" height="1" fill="#3a9048"/>
<rect x="101" y="360" width="2" height="4" fill="#3a9048"/><rect x="101.5" y="359" width="1" height="1" fill="#3a9048"/>
<rect x="106" y="361" width="3" height="3" fill="#3a9048"/><rect x="107" y="360" width="1" height="1" fill="#3a9048"/>
<rect x="112" y="356" width="9" height="2" fill="#dce848"/><rect x="121" y="356" width="7" height="1" fill="#b4d848"/>
<rect x="113" y="360" width="2" height="4" fill="#3a9048"/><rect x="113.5" y="359" width="1" height="1" fill="#3a9048"/>
<rect x="117" y="360" width="2" height="4" fill="#3a9048"/><rect x="117.5" y="359" width="1" height="1" fill="#3a9048"/>
<rect x="122" y="361" width="3" height="3" fill="#3a9048"/><rect x="123" y="360" width="1" height="1" fill="#3a9048"/>
<rect x="128" y="356" width="9" height="2" fill="#dce848"/><rect x="137" y="356" width="7" height="1" fill="#b4d848"/>
<rect x="129" y="360" width="2" height="4" fill="#3a9048"/><rect x="129.5" y="359" width="1" height="1" fill="#3a9048"/>
<rect x="133" y="360" width="2" height="4" fill="#3a9048"/><rect x="133.5" y="359" width="1" height="1" fill="#3a9048"/>
<rect x="138" y="361" width="3" height="3" fill="#3a9048"/><rect x="139" y="360" width="1" height="1" fill="#3a9048"/>
<rect x="144" y="356" width="9" height="2" fill="#dce848"/><rect x="153" y="356" width="7" height="1" fill="#b4d848"/>
<rect x="145" y="360" width="2" height="4" fill="#3a9048"/><rect x="145.5" y="359" width="1" height="1" fill="#3a9048"/>
<rect x="149" y="360" width="2" height="4" fill="#3a9048"/><rect x="149.5" y="359" width="1" height="1" fill="#3a9048"/>
<rect x="154" y="361" width="3" height="3" fill="#3a9048"/><rect x="155" y="360" width="1" height="1" fill="#3a9048"/>
<rect x="160" y="356" width="9" height="2" fill="#dce848"/><rect x="169" y="356" width="7" height="1" fill="#b4d848"/>
<rect x="161" y="360" width="2" height="4" fill="#3a9048"/><rect x="161.5" y="359" width="1" height="1" fill="#3a9048"/>
<rect x="165" y="360" width="2" height="4" fill="#3a9048"/><rect x="165.5" y="359" width="1" height="1" fill="#3a9048"/>
<rect x="170" y="361" width="3" height="3" fill="#3a9048"/><rect x="171" y="360" width="1" height="1" fill="#3a9048"/>
<rect x="176" y="356" width="9" height="2" fill="#dce848"/><rect x="185" y="356" width="7" height="1" fill="#b4d848"/>
<rect x="177" y="360" width="2" height="4" fill="#3a9048"/><rect x="177.5" y="359" width="1" height="1" fill="#3a9048"/>
<rect x="181" y="360" width="2" height="4" fill="#3a9048"/><rect x="181.5" y="359" width="1" height="1" fill="#3a9048"/>
<rect x="186" y="361" width="3" height="3" fill="#3a9048"/><rect x="187" y="360" width="1" height="1" fill="#3a9048"/>
<rect x="192" y="356" width="9" height="2" fill="#dce848"/><rect x="201" y="356" width="7" height="1" fill="#b4d848"/>
<rect x="193" y="360" width="2" height="4" fill="#3a9048"/><rect x="193.5" y="359" width="1" height="1" fill="#3a9048"/>
<rect x="197" y="360" width="2" height="4" fill="#3a9048"/><rect x="197.5" y="359" width="1" height="1" fill="#3a9048"/>
<rect x="202" y="361" width="3" height="3" fill="#3a9048"/><rect x="203" y="360" width="1" height="1" fill="#3a9048"/>
<rect x="208" y="356" width="9" height="2" fill="#dce848"/><rect x="217" y="356" width="7" height="1" fill="#b4d848"/>
<rect x="209" y="360" width="2" height="4" fill="#3a9048"/><rect x="209.5" y="359" width="1" height="1" fill="#3a9048"/>
<rect x="213" y="360" width="2" height="4" fill="#3a9048"/><rect x="213.5" y="359" width="1" height="1" fill="#3a9048"/>
<rect x="218" y="361" width="3" height="3" fill="#3a9048"/><rect x="219" y="360" width="1" height="1" fill="#3a9048"/>
<rect x="224" y="356" width="9" height="2" fill="#dce848"/><rect x="233" y="356" width="7" height="1" fill="#b4d848"/>
<rect x="225" y="360" width="2" height="4" fill="#3a9048"/><rect x="225.5" y="359" width="1" height="1" fill="#3a9048"/>
<rect x="229" y="360" width="2" height="4" fill="#3a9048"/><rect x="229.5" y="359" width="1" height="1" fill="#3a9048"/>
<rect x="234" y="361" width="3" height="3" fill="#3a9048"/><rect x="235" y="360" width="1" height="1" fill="#3a9048"/>
<rect x="240" y="356" width="9" height="2" fill="#dce848"/><rect x="249" y="356" width="7" height="1" fill="#b4d848"/>
<rect x="241" y="360" width="2" height="4" fill="#3a9048"/><rect x="241.5" y="359" width="1" height="1" fill="#3a9048"/>
<rect x="245" y="360" width="2" height="4" fill="#3a9048"/><rect x="245.5" y="359" width="1" height="1" fill="#3a9048"/>
<rect x="250" y="361" width="3" height="3" fill="#3a9048"/><rect x="251" y="360" width="1" height="1" fill="#3a9048"/>
<rect x="256" y="356" width="9" height="2" fill="#dce848"/><rect x="265" y="356" width="7" height="1" fill="#b4d848"/>
<rect x="257" y="360" width="2" height="4" fill="#3a9048"/><rect x="257.5" y="359" width="1" height="1" fill="#3a9048"/>
<rect x="261" y="360" width="2" height="4" fill="#3a9048"/><rect x="261.5" y="359" width="1" height="1" fill="#3a9048"/>
<rect x="266" y="361" width="3" height="3" fill="#3a9048"/><rect x="267" y="360" width="1" height="1" fill="#3a9048"/>
<rect x="272" y="356" width="9" height="2" fill="#dce848"/><rect x="281" y="356" width="7" height="1" fill="#b4d848"/>
<rect x="273" y="360" width="2" height="4" fill="#3a9048"/><rect x="273.5" y="359" width="1" height="1" fill="#3a9048"/>
<rect x="277" y="360" width="2" height="4" fill="#3a9048"/><rect x="277.5" y="359" width="1" height="1" fill="#3a9048"/>
<rect x="282" y="361" width="3" height="3" fill="#3a9048"/><rect x="283" y="360" width="1" height="1" fill="#3a9048"/>
<rect x="288" y="356" width="9" height="2" fill="#dce848"/><rect x="297" y="356" width="7" height="1" fill="#b4d848"/>
<rect x="289" y="360" width="2" height="4" fill="#3a9048"/><rect x="289.5" y="359" width="1" height="1" fill="#3a9048"/>
<rect x="293" y="360" width="2" height="4" fill="#3a9048"/><rect x="293.5" y="359" width="1" height="1" fill="#3a9048"/>
<rect x="298" y="361" width="3" height="3" fill="#3a9048"/><rect x="299" y="360" width="1" height="1" fill="#3a9048"/>
<rect x="304" y="356" width="9" height="2" fill="#dce848"/><rect x="313" y="356" width="7" height="1" fill="#b4d848"/>
<rect x="305" y="360" width="2" height="4" fill="#3a9048"/><rect x="305.5" y="359" width="1" height="1" fill="#3a9048"/>
<rect x="309" y="360" width="2" height="4" fill="#3a9048"/><rect x="309.5" y="359" width="1" height="1" fill="#3a9048"/>
<rect x="314" y="361" width="3" height="3" fill="#3a9048"/><rect x="315" y="360" width="1" height="1" fill="#3a9048"/>
<rect x="0" y="363" width="288" height="2" fill="#2a6a50"/>
<rect x="0" y="365" width="288" height="2" fill="#9a5a50"/>
<rect x="2" y="365" width="4" height="2" fill="#6a3040"/>
<rect x="10" y="365" width="4" height="2" fill="#6a3040"/>
<rect x="18" y="365" width="4" height="2" fill="#6a3040"/>
<rect x="26" y="365" width="4" height="2" fill="#6a3040"/>
<rect x="34" y="365" width="4" height="2" fill="#6a3040"/>
<rect x="42" y="365" width="4" height="2" fill="#6a3040"/>
<rect x="50" y="365" width="4" height="2" fill="#6a3040"/>
<rect x="58" y="365" width="4" height="2" fill="#6a3040"/>
<rect x="66" y="365" width="4" height="2" fill="#6a3040"/>
<rect x="74" y="365" width="4" height="2" fill="#6a3040"/>
<rect x="82" y="365" width="4" height="2" fill="#6a3040"/>
<rect x="90" y="365" width="4" height="2" fill="#6a3040"/>
<rect x="98" y="365" width="4" height="2" fill="#6a3040"/>
<rect x="106" y="365" width="4" height="2" fill="#6a3040"/>
<rect x="114" y="365" width="4" height="2" fill="#6a3040"/>
<rect x="122" y="365" width="4" height="2" fill="#6a3040"/>
<rect x="130" y="365" width="4" height="2" fill="#6a3040"/>
<rect x="138" y="365" width="4" height="2" fill="#6a3040"/>
<rect x="146" y="365" width="4" height="2" fill="#6a3040"/>
<rect x="154" y="365" width="4" height="2" fill="#6a3040"/>
<rect x="162" y="365" width="4" height="2" fill="#6a3040"/>
<rect x="170" y="365" width="4" height="2" fill="#6a3040"/>
<rect x="178" y="365" width="4" height="2" fill="#6a3040"/>
<rect x="186" y="365" width="4" height="2" fill="#6a3040"/>
<rect x="194" y="365" width="4" height="2" fill="#6a3040"/>
<rect x="202" y="365" width="4" height="2" fill="#6a3040"/>
<rect x="210" y="365" width="4" height="2" fill="#6a3040"/>
<rect x="218" y="365" width="4" height="2" fill="#6a3040"/>
<rect x="226" y="365" width="4" height="2" fill="#6a3040"/>
<rect x="234" y="365" width="4" height="2" fill="#6a3040"/>
<rect x="242" y="365" width="4" height="2" fill="#6a3040"/>
<rect x="250" y="365" width="4" height="2" fill="#6a3040"/>
<rect x="258" y="365" width="4" height="2" fill="#6a3040"/>
<rect x="266" y="365" width="4" height="2" fill="#6a3040"/>
<rect x="274" y="365" width="4" height="2" fill="#6a3040"/>
<rect x="282" y="365" width="4" height="2" fill="#6a3040"/>
<rect x="290" y="365" width="4" height="2" fill="#6a3040"/>
<path d="M20,370h2v2h4v2h-2v2h1v2h-3v-2h-2v2h-3v-2h1v-2h-2v-2h4z" fill="#fff4f0"/><rect x="17" y="378" width="2" height="1" fill="#9a4a48"/><rect x="23" y="378" width="2" height="1" fill="#9a4a48"/>
<path d="M20,402h2v2h4v2h-2v2h1v2h-3v-2h-2v2h-3v-2h1v-2h-2v-2h4z" fill="#fff4f0"/><rect x="17" y="410" width="2" height="1" fill="#9a4a48"/><rect x="23" y="410" width="2" height="1" fill="#9a4a48"/>
<path d="M8,386h2v2h4v2h-2v2h1v2h-3v-2h-2v2h-3v-2h1v-2h-2v-2h4z" fill="#8a4646"/><rect x="5" y="394" width="2" height="1" fill="#6a3040"/><rect x="11" y="394" width="2" height="1" fill="#6a3040"/><rect x="4" y="388" width="10" height="1.5" fill="#5e2a3a"/><rect x="8" y="386" width="2" height="2" fill="#5e2a3a"/>
<rect x="2" y="372" width="4" height="4" fill="#a85a50"/><rect x="2" y="404" width="4" height="4" fill="#a85a50"/>
<rect x="28" y="378" width="2" height="2" fill="#a85a50"/>
<rect x="6" y="383" width="2" height="2" fill="#a85a50"/>
<rect x="20" y="387" width="2" height="2" fill="#a85a50"/>
<rect x="30" y="392" width="2" height="2" fill="#a85a50"/>
<rect x="22" y="397" width="2" height="2" fill="#a85a50"/>
<rect x="10" y="399" width="2" height="2" fill="#a85a50"/>
<rect x="28" y="410" width="2" height="2" fill="#a85a50"/>
<path d="M52,370h2v2h4v2h-2v2h1v2h-3v-2h-2v2h-3v-2h1v-2h-2v-2h4z" fill="#fff4f0"/><rect x="49" y="378" width="2" height="1" fill="#9a4a48"/><rect x="55" y="378" width="2" height="1" fill="#9a4a48"/>
<path d="M52,402h2v2h4v2h-2v2h1v2h-3v-2h-2v2h-3v-2h1v-2h-2v-2h4z" fill="#fff4f0"/><rect x="49" y="410" width="2" height="1" fill="#9a4a48"/><rect x="55" y="410" width="2" height="1" fill="#9a4a48"/>
<path d="M40,386h2v2h4v2h-2v2h1v2h-3v-2h-2v2h-3v-2h1v-2h-2v-2h4z" fill="#8a4646"/><rect x="37" y="394" width="2" height="1" fill="#6a3040"/><rect x="43" y="394" width="2" height="1" fill="#6a3040"/><rect x="36" y="388" width="10" height="1.5" fill="#5e2a3a"/><rect x="40" y="386" width="2" height="2" fill="#5e2a3a"/>
<rect x="34" y="372" width="4" height="4" fill="#a85a50"/><rect x="34" y="404" width="4" height="4" fill="#a85a50"/>
<rect x="60" y="378" width="2" height="2" fill="#a85a50"/>
<rect x="38" y="383" width="2" height="2" fill="#a85a50"/>
<rect x="52" y="387" width="2" height="2" fill="#a85a50"/>
<rect x="62" y="392" width="2" height="2" fill="#a85a50"/>
<rect x="54" y="397" width="2" height="2" fill="#a85a50"/>
<rect x="42" y="399" width="2" height="2" fill="#a85a50"/>
<rect x="60" y="410" width="2" height="2" fill="#a85a50"/>
<path d="M84,370h2v2h4v2h-2v2h1v2h-3v-2h-2v2h-3v-2h1v-2h-2v-2h4z" fill="#fff4f0"/><rect x="81" y="378" width="2" height="1" fill="#9a4a48"/><rect x="87" y="378" width="2" height="1" fill="#9a4a48"/>
<path d="M84,402h2v2h4v2h-2v2h1v2h-3v-2h-2v2h-3v-2h1v-2h-2v-2h4z" fill="#fff4f0"/><rect x="81" y="410" width="2" height="1" fill="#9a4a48"/><rect x="87" y="410" width="2" height="1" fill="#9a4a48"/>
<path d="M72,386h2v2h4v2h-2v2h1v2h-3v-2h-2v2h-3v-2h1v-2h-2v-2h4z" fill="#8a4646"/><rect x="69" y="394" width="2" height="1" fill="#6a3040"/><rect x="75" y="394" width="2" height="1" fill="#6a3040"/><rect x="68" y="388" width="10" height="1.5" fill="#5e2a3a"/><rect x="72" y="386" width="2" height="2" fill="#5e2a3a"/>
<rect x="66" y="372" width="4" height="4" fill="#a85a50"/><rect x="66" y="404" width="4" height="4" fill="#a85a50"/>
<rect x="92" y="378" width="2" height="2" fill="#a85a50"/>
<rect x="70" y="383" width="2" height="2" fill="#a85a50"/>
<rect x="84" y="387" width="2" height="2" fill="#a85a50"/>
<rect x="94" y="392" width="2" height="2" fill="#a85a50"/>
<rect x="86" y="397" width="2" height="2" fill="#a85a50"/>
<rect x="74" y="399" width="2" height="2" fill="#a85a50"/>
<rect x="92" y="410" width="2" height="2" fill="#a85a50"/>
<path d="M116,370h2v2h4v2h-2v2h1v2h-3v-2h-2v2h-3v-2h1v-2h-2v-2h4z" fill="#fff4f0"/><rect x="113" y="378" width="2" height="1" fill="#9a4a48"/><rect x="119" y="378" width="2" height="1" fill="#9a4a48"/>
<path d="M116,402h2v2h4v2h-2v2h1v2h-3v-2h-2v2h-3v-2h1v-2h-2v-2h4z" fill="#fff4f0"/><rect x="113" y="410" width="2" height="1" fill="#9a4a48"/><rect x="119" y="410" width="2" height="1" fill="#9a4a48"/>
<path d="M104,386h2v2h4v2h-2v2h1v2h-3v-2h-2v2h-3v-2h1v-2h-2v-2h4z" fill="#8a4646"/><rect x="101" y="394" width="2" height="1" fill="#6a3040"/><rect x="107" y="394" width="2" height="1" fill="#6a3040"/><rect x="100" y="388" width="10" height="1.5" fill="#5e2a3a"/><rect x="104" y="386" width="2" height="2" fill="#5e2a3a"/>
<rect x="98" y="372" width="4" height="4" fill="#a85a50"/><rect x="98" y="404" width="4" height="4" fill="#a85a50"/>
<rect x="124" y="378" width="2" height="2" fill="#a85a50"/>
<rect x="102" y="383" width="2" height="2" fill="#a85a50"/>
<rect x="116" y="387" width="2" height="2" fill="#a85a50"/>
<rect x="126" y="392" width="2" height="2" fill="#a85a50"/>
<rect x="118" y="397" width="2" height="2" fill="#a85a50"/>
<rect x="106" y="399" width="2" height="2" fill="#a85a50"/>
<rect x="124" y="410" width="2" height="2" fill="#a85a50"/>
<path d="M148,370h2v2h4v2h-2v2h1v2h-3v-2h-2v2h-3v-2h1v-2h-2v-2h4z" fill="#fff4f0"/><rect x="145" y="378" width="2" height="1" fill="#9a4a48"/><rect x="151" y="378" width="2" height="1" fill="#9a4a48"/>
<path d="M148,402h2v2h4v2h-2v2h1v2h-3v-2h-2v2h-3v-2h1v-2h-2v-2h4z" fill="#fff4f0"/><rect x="145" y="410" width="2" height="1" fill="#9a4a48"/><rect x="151" y="410" width="2" height="1" fill="#9a4a48"/>
<path d="M136,386h2v2h4v2h-2v2h1v2h-3v-2h-2v2h-3v-2h1v-2h-2v-2h4z" fill="#8a4646"/><rect x="133" y="394" width="2" height="1" fill="#6a3040"/><rect x="139" y="394" width="2" height="1" fill="#6a3040"/><rect x="132" y="388" width="10" height="1.5" fill="#5e2a3a"/><rect x="136" y="386" width="2" height="2" fill="#5e2a3a"/>
<rect x="130" y="372" width="4" height="4" fill="#a85a50"/><rect x="130" y="404" width="4" height="4" fill="#a85a50"/>
<rect x="156" y="378" width="2" height="2" fill="#a85a50"/>
<rect x="134" y="383" width="2" height="2" fill="#a85a50"/>
<rect x="148" y="387" width="2" height="2" fill="#a85a50"/>
<rect x="158" y="392" width="2" height="2" fill="#a85a50"/>
<rect x="150" y="397" width="2" height="2" fill="#a85a50"/>
<rect x="138" y="399" width="2" height="2" fill="#a85a50"/>
<rect x="156" y="410" width="2" height="2" fill="#a85a50"/>
<path d="M180,370h2v2h4v2h-2v2h1v2h-3v-2h-2v2h-3v-2h1v-2h-2v-2h4z" fill="#fff4f0"/><rect x="177" y="378" width="2" height="1" fill="#9a4a48"/><rect x="183" y="378" width="2" height="1" fill="#9a4a48"/>
<path d="M180,402h2v2h4v2h-2v2h1v2h-3v-2h-2v2h-3v-2h1v-2h-2v-2h4z" fill="#fff4f0"/><rect x="177" y="410" width="2" height="1" fill="#9a4a48"/><rect x="183" y="410" width="2" height="1" fill="#9a4a48"/>
<path d="M168,386h2v2h4v2h-2v2h1v2h-3v-2h-2v2h-3v-2h1v-2h-2v-2h4z" fill="#8a4646"/><rect x="165" y="394" width="2" height="1" fill="#6a3040"/><rect x="171" y="394" width="2" height="1" fill="#6a3040"/><rect x="164" y="388" width="10" height="1.5" fill="#5e2a3a"/><rect x="168" y="386" width="2" height="2" fill="#5e2a3a"/>
<rect x="162" y="372" width="4" height="4" fill="#a85a50"/><rect x="162" y="404" width="4" height="4" fill="#a85a50"/>
<rect x="188" y="378" width="2" height="2" fill="#a85a50"/>
<rect x="166" y="383" width="2" height="2" fill="#a85a50"/>
<rect x="180" y="387" width="2" height="2" fill="#a85a50"/>
<rect x="190" y="392" width="2" height="2" fill="#a85a50"/>
<rect x="182" y="397" width="2" height="2" fill="#a85a50"/>
<rect x="170" y="399" width="2" height="2" fill="#a85a50"/>
<rect x="188" y="410" width="2" height="2" fill="#a85a50"/>
<path d="M212,370h2v2h4v2h-2v2h1v2h-3v-2h-2v2h-3v-2h1v-2h-2v-2h4z" fill="#fff4f0"/><rect x="209" y="378" width="2" height="1" fill="#9a4a48"/><rect x="215" y="378" width="2" height="1" fill="#9a4a48"/>
<path d="M212,402h2v2h4v2h-2v2h1v2h-3v-2h-2v2h-3v-2h1v-2h-2v-2h4z" fill="#fff4f0"/><rect x="209" y="410" width="2" height="1" fill="#9a4a48"/><rect x="215" y="410" width="2" height="1" fill="#9a4a48"/>
<path d="M200,386h2v2h4v2h-2v2h1v2h-3v-2h-2v2h-3v-2h1v-2h-2v-2h4z" fill="#8a4646"/><rect x="197" y="394" width="2" height="1" fill="#6a3040"/><rect x="203" y="394" width="2" height="1" fill="#6a3040"/><rect x="196" y="388" width="10" height="1.5" fill="#5e2a3a"/><rect x="200" y="386" width="2" height="2" fill="#5e2a3a"/>
<rect x="194" y="372" width="4" height="4" fill="#a85a50"/><rect x="194" y="404" width="4" height="4" fill="#a85a50"/>
<rect x="220" y="378" width="2" height="2" fill="#a85a50"/>
<rect x="198" y="383" width="2" height="2" fill="#a85a50"/>
<rect x="212" y="387" width="2" height="2" fill="#a85a50"/>
<rect x="222" y="392" width="2" height="2" fill="#a85a50"/>
<rect x="214" y="397" width="2" height="2" fill="#a85a50"/>
<rect x="202" y="399" width="2" height="2" fill="#a85a50"/>
<rect x="220" y="410" width="2" height="2" fill="#a85a50"/>
<path d="M244,370h2v2h4v2h-2v2h1v2h-3v-2h-2v2h-3v-2h1v-2h-2v-2h4z" fill="#fff4f0"/><rect x="241" y="378" width="2" height="1" fill="#9a4a48"/><rect x="247" y="378" width="2" height="1" fill="#9a4a48"/>
<path d="M244,402h2v2h4v2h-2v2h1v2h-3v-2h-2v2h-3v-2h1v-2h-2v-2h4z" fill="#fff4f0"/><rect x="241" y="410" width="2" height="1" fill="#9a4a48"/><rect x="247" y="410" width="2" height="1" fill="#9a4a48"/>
<path d="M232,386h2v2h4v2h-2v2h1v2h-3v-2h-2v2h-3v-2h1v-2h-2v-2h4z" fill="#8a4646"/><rect x="229" y="394" width="2" height="1" fill="#6a3040"/><rect x="235" y="394" width="2" height="1" fill="#6a3040"/><rect x="228" y="388" width="10" height="1.5" fill="#5e2a3a"/><rect x="232" y="386" width="2" height="2" fill="#5e2a3a"/>
<rect x="226" y="372" width="4" height="4" fill="#a85a50"/><rect x="226" y="404" width="4" height="4" fill="#a85a50"/>
<rect x="252" y="378" width="2" height="2" fill="#a85a50"/>
<rect x="230" y="383" width="2" height="2" fill="#a85a50"/>
<rect x="244" y="387" width="2" height="2" fill="#a85a50"/>
<rect x="254" y="392" width="2" height="2" fill="#a85a50"/>
<rect x="246" y="397" width="2" height="2" fill="#a85a50"/>
<rect x="234" y="399" width="2" height="2" fill="#a85a50"/>
<rect x="252" y="410" width="2" height="2" fill="#a85a50"/>
<path d="M276,370h2v2h4v2h-2v2h1v2h-3v-2h-2v2h-3v-2h1v-2h-2v-2h4z" fill="#fff4f0"/><rect x="273" y="378" width="2" height="1" fill="#9a4a48"/><rect x="279" y="378" width="2" height="1" fill="#9a4a48"/>
<path d="M276,402h2v2h4v2h-2v2h1v2h-3v-2h-2v2h-3v-2h1v-2h-2v-2h4z" fill="#fff4f0"/><rect x="273" y="410" width="2" height="1" fill="#9a4a48"/><rect x="279" y="410" width="2" height="1" fill="#9a4a48"/>
<path d="M264,386h2v2h4v2h-2v2h1v2h-3v-2h-2v2h-3v-2h1v-2h-2v-2h4z" fill="#8a4646"/><rect x="261" y="394" width="2" height="1" fill="#6a3040"/><rect x="267" y="394" width="2" height="1" fill="#6a3040"/><rect x="260" y="388" width="10" height="1.5" fill="#5e2a3a"/><rect x="264" y="386" width="2" height="2" fill="#5e2a3a"/>
<rect x="258" y="372" width="4" height="4" fill="#a85a50"/><rect x="258" y="404" width="4" height="4" fill="#a85a50"/>
<rect x="284" y="378" width="2" height="2" fill="#a85a50"/>
<rect x="262" y="383" width="2" height="2" fill="#a85a50"/>
<rect x="276" y="387" width="2" height="2" fill="#a85a50"/>
<rect x="286" y="392" width="2" height="2" fill="#a85a50"/>
<rect x="278" y="397" width="2" height="2" fill="#a85a50"/>
<rect x="266" y="399" width="2" height="2" fill="#a85a50"/>
<rect x="284" y="410" width="2" height="2" fill="#a85a50"/>
<path d="M308,370h2v2h4v2h-2v2h1v2h-3v-2h-2v2h-3v-2h1v-2h-2v-2h4z" fill="#fff4f0"/><rect x="305" y="378" width="2" height="1" fill="#9a4a48"/><rect x="311" y="378" width="2" height="1" fill="#9a4a48"/>
<path d="M308,402h2v2h4v2h-2v2h1v2h-3v-2h-2v2h-3v-2h1v-2h-2v-2h4z" fill="#fff4f0"/><rect x="305" y="410" width="2" height="1" fill="#9a4a48"/><rect x="311" y="410" width="2" height="1" fill="#9a4a48"/>
<path d="M296,386h2v2h4v2h-2v2h1v2h-3v-2h-2v2h-3v-2h1v-2h-2v-2h4z" fill="#8a4646"/><rect x="293" y="394" width="2" height="1" fill="#6a3040"/><rect x="299" y="394" width="2" height="1" fill="#6a3040"/><rect x="292" y="388" width="10" height="1.5" fill="#5e2a3a"/><rect x="296" y="386" width="2" height="2" fill="#5e2a3a"/>
<rect x="290" y="372" width="4" height="4" fill="#a85a50"/><rect x="290" y="404" width="4" height="4" fill="#a85a50"/>
<rect x="316" y="378" width="2" height="2" fill="#a85a50"/>
<rect x="294" y="383" width="2" height="2" fill="#a85a50"/>
<rect x="308" y="387" width="2" height="2" fill="#a85a50"/>
<rect x="318" y="392" width="2" height="2" fill="#a85a50"/>
<rect x="310" y="397" width="2" height="2" fill="#a85a50"/>
<rect x="298" y="399" width="2" height="2" fill="#a85a50"/>
<rect x="316" y="410" width="2" height="2" fill="#a85a50"/>
<rect x="111.5" y="175.5" width="64" height="64" fill="none" stroke="#18a8b8" stroke-width="1" shape-rendering="auto"/>
<rect x="112" y="176" width="63" height="63" rx="5" fill="#1f3f4b" shape-rendering="auto"/>
<path transform="translate(112,176)" d="M9,22 L14,18 L20,20 L21,14 L25,10 L29,14 L34.5,14 L38,10 L43,14 L44,20 L50,18 L55,22 L52,30 L52,48 Q32,58 12,48 L11,30 Z" fill="#2b4351" shape-rendering="auto"/>
<g transform="translate(112,176)" shape-rendering="auto" fill="none" stroke="#c04048"><circle cx="21.5" cy="32.5" r="3.9" stroke-width="1.3"/><circle cx="42.5" cy="32.5" r="3.9" stroke-width="1.3"/><path d="M11.4,40.8 H16.4 Q19,40.8 20,45.6 H27.6 V42.3 H36.4 V45.6 H44.5 Q45.5,40.8 48,40.8 H52.5" stroke-width="1.5"/></g>
<rect x="143" y="205.5" width="2" height="6" fill="#c04048"/></g>
<g transform="translate(288,0)"><g clip-path="url(#vc)"><use href="#pview"/></g></g>
</svg>
<div class="a" style="left:420px;top:164px;width:577px;height:417px;border:1px solid #5f86ea"></div>
<div class="a" style="left:420px;top:78px;width:1px;height:562px;background:#6ab020"></div>
<div class="a" style="left:284px;top:164px;width:803px;height:1px;background:#d0384e"></div>
<div class="a" style="left:421px;top:164px;width:576px;height:1px;background:#a8489c"></div>
<svg style="left:296px;top:91px" width="14" height="14"><rect x="5.5" y="5.5" width="3" height="3" fill="#e0e0e0"/><path d="M4.5,1.2 L7,3.4 L9.5,1.2 M4.5,12.8 L7,10.6 L9.5,12.8 M1.2,4.5 L3.4,7 L1.2,9.5 M12.8,4.5 L10.6,7 L12.8,9.5" fill="none" stroke="#e0e0e0" stroke-width="1.5"/></svg>
<svg style="left:327px;top:90px" width="16" height="16"><circle cx="8" cy="7.6" r="7.3" fill="#e0e0e0"/><rect x="3.8" y="6.5" width="8.4" height="2.2" fill="#2a2a2a"/></svg>
<div class="t" style="left:361px;top:84px;color:#e6e6e6;letter-spacing:0.1px">50 %</div>
<svg style="left:411px;top:90px" width="16" height="16"><circle cx="8" cy="7.6" r="7.3" fill="#e0e0e0"/><rect x="3.8" y="6.5" width="8.4" height="2.2" fill="#2a2a2a"/><rect x="6.9" y="3.4" width="2.2" height="8.4" fill="#2a2a2a"/></svg>
<svg style="left:408px;top:152px" width="25" height="25"><path d="M12.5,4 V21 M4,12.5 H21" stroke="#1a1a1a" stroke-width="3.5"/><path d="M12.5,5 V20 M5,12.5 H20" stroke="#e0e0e0" stroke-width="1.6"/><circle cx="12.5" cy="12.5" r="4.2" fill="#1a1a1a"/><circle cx="12.5" cy="12.5" r="3" fill="#d8d8d8"/></svg>
</body></html>
